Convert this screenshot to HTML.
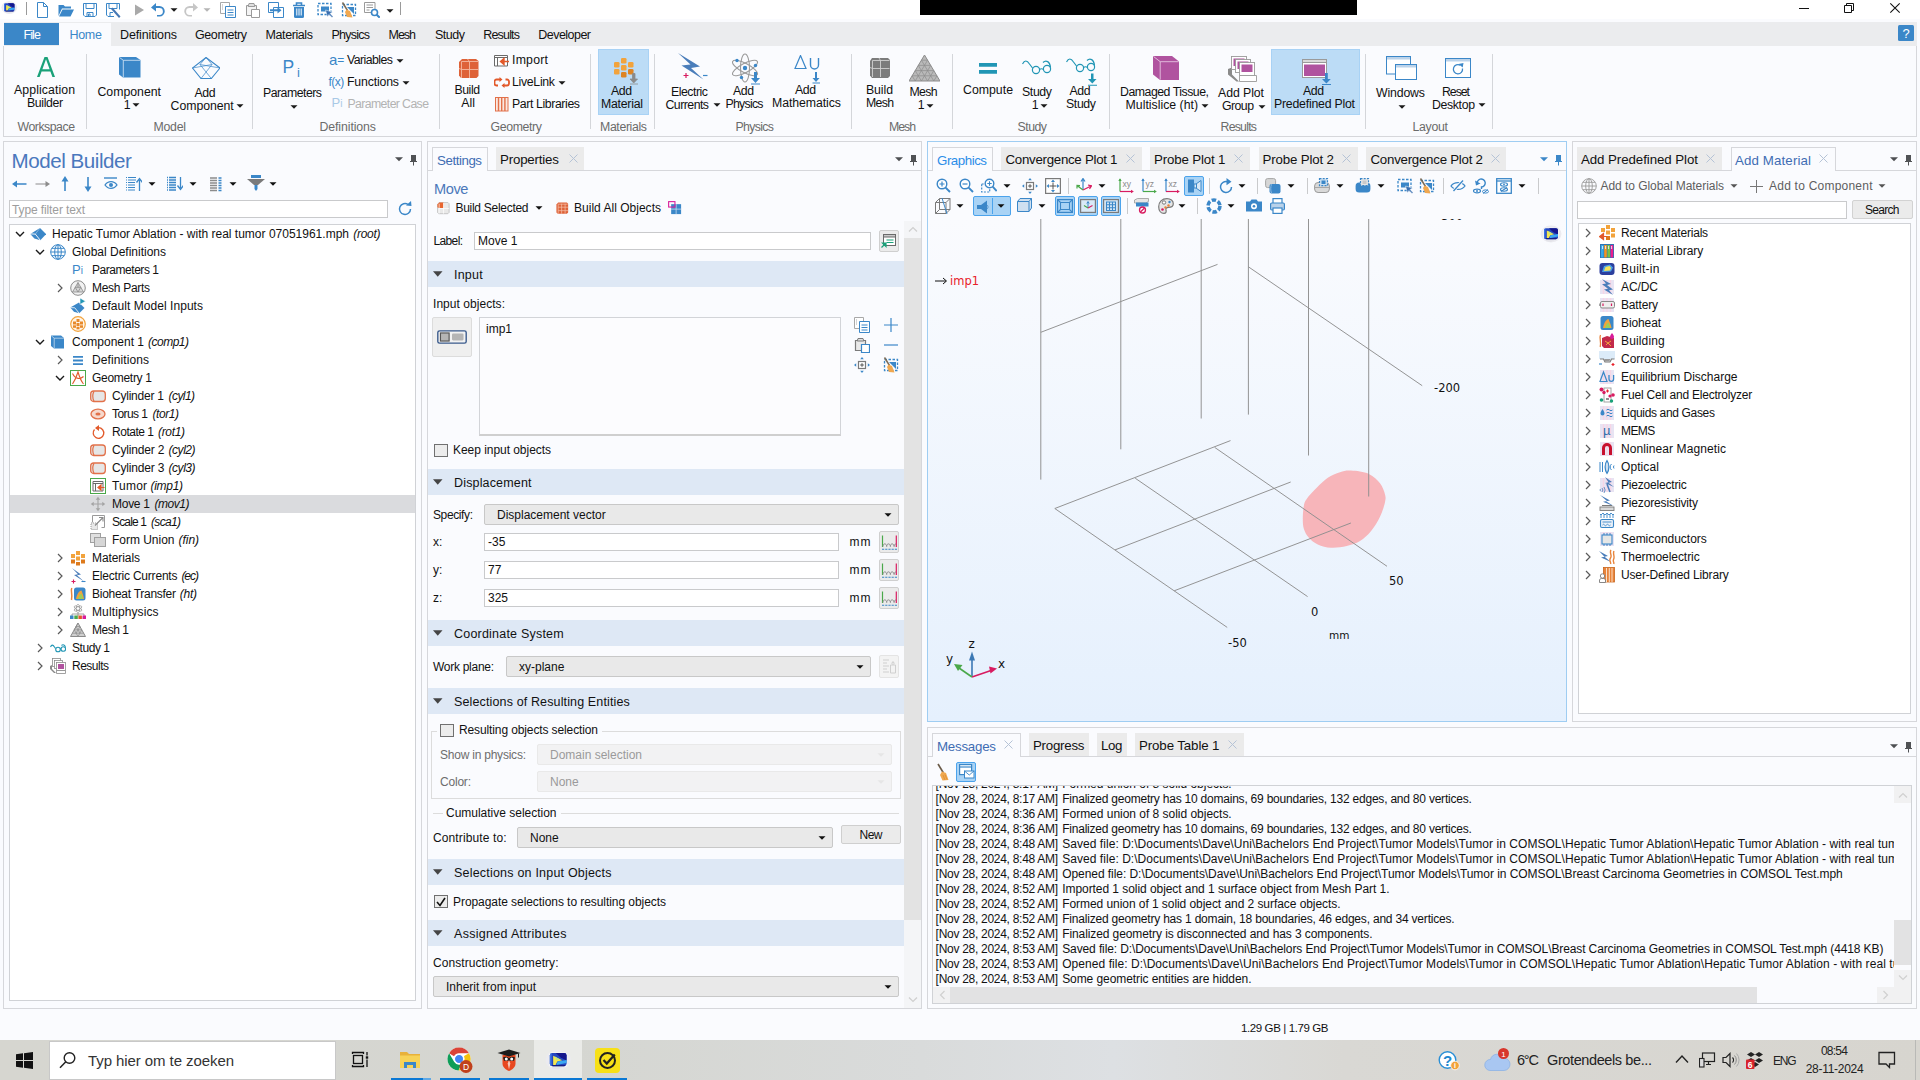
<!DOCTYPE html>
<html><head><meta charset="utf-8"><title>COMSOL Multiphysics</title><style>
html,body{margin:0;padding:0}
body{width:1920px;height:1080px;overflow:hidden;position:relative;background:#fafbfe;font-family:"Liberation Sans",sans-serif;font-size:12px;color:#111}
#root{position:absolute;left:0;top:0;width:1920px;height:1080px;overflow:hidden}
#root div,#root svg,#root span.a{position:absolute;box-sizing:border-box}
#root div.t{white-space:pre;box-sizing:content-box}
#root div.t span{position:static}
i{font-style:italic}
</style></head><body><div id="root">
<!-- ribbon -->
<div style="left:0px;top:0px;width:1920px;height:19px;background:#fff"></div>
<svg style="left:1px;top:0px;" width="16.5" height="15" viewBox="0 0 22 20"><ellipse cx="11" cy="10" rx="10.500" ry="8.500" fill="#ebebf0"/><path d="M3 7l12-4 1 1 4 9-9 5-5-1z" fill="#e4e4ea"/><rect x="3.500" y="3.700" width="15" height="12" rx="2.200" fill="#fdfdf6"/><rect x="4" y="4.200" width="14" height="11" rx="2" fill="#2446c0"/><path d="M9 4.200h7a2 2 0 0 1 2 2v4.300l-5-2.500z" fill="#15168c"/><path d="M4 6.200a2 2 0 0 1 1.500-1.900v10.800a2 2 0 0 1-1.500-1.900z" fill="#3d74e6"/><path d="M6.800 6.500l7.500 3.800-4 1-1.500 2.800h-2z" fill="#f3e64e"/><path d="M8 6.800l4.500 2.700-3 .5z" fill="#b8e68a"/><path d="M10.500 11.300l7.500-1.300v2.500l-8.500 1.700z" fill="#3aa8f2"/><path d="M5.500 14.300h11.500a2 2 0 0 1-1 .9h-9.500z" fill="#10106e"/></svg>
<svg style="left:33.5px;top:2px" width="16" height="16" viewBox="0 0 16 16"><path d="M3.5 .5h6l4 4v11h-10z" fill="#fff" stroke="#3b87c8" stroke-width="1"/><path d="M9.5 .5v4h4" fill="none" stroke="#3b87c8"/></svg>
<svg style="left:58px;top:2px" width="16" height="16" viewBox="0 0 16 16"><path d="M.5 3h5l1.5 1.5h6v2h-9L.5 14z" fill="#3b87c8"/><path d="M4.5 7.5h11.5l-3.5 7H1z" fill="#3b87c8"/></svg>
<svg style="left:82px;top:2px" width="16" height="16" viewBox="0 0 16 16"><path d="M1.5 1.5h13v11.5l-1.5 1.5h-10l-1.5-1.5z" fill="#fff" stroke="#3b87c8"/><path d="M4 1.5v5h8v-5" fill="none" stroke="#3b87c8"/><path d="M5 14.5v-4h6v4M6.5 12h1.5v2.5h-1.5z" fill="none" stroke="#3b87c8"/></svg>
<svg style="left:105px;top:2px" width="16" height="16" viewBox="0 0 16 16"><path d="M1.5 1.5h13v6M9 14.5h-6l-1.5-1.5v-11.5" fill="none" stroke="#3b87c8"/><path d="M4 1.5v5h8v-5" fill="none" stroke="#3b87c8"/><path d="M5 14.5v-4h3" fill="none" stroke="#3b87c8"/><path d="M7.5 5.5l8 9-1.5 1.5-8-9z" fill="#4678b4"/></svg>
<svg style="left:132px;top:2px" width="16" height="16" viewBox="0 0 16 16"><path d="M3 2.5l9 5.5-9 5.5z" fill="#a9a9a9"/></svg>
<svg style="left:150px;top:2px" width="16" height="16" viewBox="0 0 16 16"><path d="M1 5.5l5-4.5v3h3.5a5 5 0 0 1 0 10.5h-2.5v-1.6h2.5a3.4 3.4 0 0 0 0-6.8h-3.5v3.4z" fill="#3b87c8"/></svg>
<svg style="left:183px;top:2px" width="16" height="16" viewBox="0 0 16 16"><path d="M15 5.5l-5-4.5v3h-3.500a5 5 0 0 0 0 10.500h2.500v-1.600h-2.500a3.400 3.400 0 0 1 0-6.800h3.500v3.400z" fill="#c6c6c6"/></svg>
<svg style="left:220px;top:2px" width="16" height="16" viewBox="0 0 16 16"><path d="M.5 .5h9v11h-9z" fill="#fff" stroke="#a8a8a8"/><path d="M2 3h1M2 5h1M2 7h1" stroke="#a8a8a8"/><path d="M5.500 4.500h10v11h-10z" fill="#fff" stroke="#3b87c8"/><path d="M7.500 8h6M7.500 10.500h6M7.500 13h6" stroke="#3b87c8"/></svg>
<svg style="left:245px;top:2px" width="16" height="16" viewBox="0 0 16 16"><path d="M1.500 3.500h10v10h-10z" fill="#f4f4f4" stroke="#9a9a9a"/><path d="M4 1.500h5l.8 3h-6.600z" fill="#e0e0e0" stroke="#9a9a9a"/><path d="M6.500 7.500h8v8h-8z" fill="#fff" stroke="#9a9a9a"/></svg>
<svg style="left:268px;top:2px" width="16" height="16" viewBox="0 0 16 16"><path d="M.5 .5h10v10h-10z" fill="#fff" stroke="#3b87c8"/><path d="M5.500 5.500h10v10h-10z" fill="#fff" stroke="#3b87c8"/><path d="M2 7.300h7.500v-2.300l4 3.300-4 3.300v-2.300h-7.500z" fill="#3b87c8"/></svg>
<svg style="left:291px;top:2px" width="16" height="16" viewBox="0 0 16 16"><path d="M2 3.500h12M5.500 3v-2h5v2" fill="none" stroke="#3b87c8" stroke-width="1.6"/><path d="M3 5h10v9.500a1.500 1.500 0 0 1-1.500 1.500h-7a1.500 1.500 0 0 1-1.500-1.500z" fill="#3b87c8"/><path d="M5.800 6.500v7M8 6.500v7M10.200 6.500v7" stroke="#fff" stroke-width="1"/></svg>
<svg style="left:317px;top:2px" width="16" height="16" viewBox="0 0 16 16"><path d="M1 1.500h13v11h-13z" fill="none" stroke="#3b87c8" stroke-width="1.300" stroke-dasharray="2.500 1.500"/><path d="M4 4.500h8v5h-8z" fill="#3b87c8"/><path d="M8.500 8l2 7 1.500-2.500 3 3 1-1-3-3 2.500-1.500z" fill="#3a6fb0" stroke="#fff" stroke-width=".5"/></svg>
<svg style="left:341px;top:2px" width="16" height="16" viewBox="0 0 16 16"><path d="M1.500 2.500h13v11h-13z" fill="none" stroke="#3b87c8" stroke-width="1.300" stroke-dasharray="2.500 1.500"/><path d="M6 5h7v7z" fill="#3b87c8"/><path d="M1.500 .5l5 8" stroke="#7a6a55" stroke-width="1.500"/><path d="M5.500 7.500l3.500 1.500 2.500 6.500-5.500-.5-2-5z" fill="#f0a850"/></svg>
<svg style="left:364px;top:2px" width="16" height="16" viewBox="0 0 16 16"><path d="M.5 .5h10.500v10h-10.500z" fill="#fff" stroke="#9a9a9a"/><path d="M2.500 3h6.500M2.500 5.500h6.500M2.500 8h3" stroke="#9a9a9a"/><circle cx="10.500" cy="10.500" r="3" fill="#fff" stroke="#3b87c8" stroke-width="1.600"/><path d="M12.700 12.700l3 3" stroke="#3b87c8" stroke-width="2"/></svg>
<div style="left:26px;top:2px;width:1px;height:13px;background:#9a9a9a"></div>
<div style="left:400px;top:2px;width:1px;height:13px;background:#9a9a9a"></div>
<svg style="left:169.5px;top:6.5px;" width="8" height="6" viewBox="0 0 8 6"><path d="M0.5 1.2h7.0L4 4.7z" fill="#1a1a1a"/></svg>
<svg style="left:202.5px;top:6.5px;" width="8" height="6" viewBox="0 0 8 6"><path d="M0.5 1.2h7.0L4 4.7z" fill="#b5b5b5"/></svg>
<svg style="left:385.5px;top:7.5px;" width="8" height="6" viewBox="0 0 8 6"><path d="M0.5 1.2h7.0L4 4.7z" fill="#1a1a1a"/></svg>
<div style="left:920px;top:0px;width:437px;height:15px;background:#000"></div>
<svg style="left:1798px;top:3px;" width="12" height="12" viewBox="0 0 12 12"><path d="M1 5.500h10" stroke="#111" stroke-width="1"/></svg>
<svg style="left:1843px;top:2px;" width="12" height="12" viewBox="0 0 12 12"><path d="M1.500 3.500h7v7h-7zM3.500 3.500v-2h7v7h-2" fill="none" stroke="#111" stroke-width="1"/></svg>
<svg style="left:1889px;top:2px;" width="12" height="12" viewBox="0 0 12 12"><path d="M1.300 1.300l9.400 9.400M10.700 1.300l-9.400 9.400" stroke="#111" stroke-width="1.100"/></svg>
<div style="left:4px;top:22px;width:1913px;height:24px;background:#ebecee"></div>
<div style="left:4px;top:23px;width:55px;height:22px;background:#3b87c8"></div>
<div style="left:59px;top:23px;width:52px;height:23px;background:#fafbfe"></div>
<div class="t" style="left:23.4px;top:27px;height:16px;line-height:16px;font-size:12.5px;letter-spacing:-0.848px;color:#fff">File</div>
<div class="t" style="left:69.4px;top:27px;height:16px;line-height:16px;font-size:12.5px;letter-spacing:-0.248px;color:#3b87c8">Home</div>
<div class="t" style="left:120px;top:27px;height:16px;line-height:16px;font-size:12.5px;letter-spacing:-0.136px;color:#111">Definitions</div>
<div class="t" style="left:195px;top:27px;height:16px;line-height:16px;font-size:12.5px;letter-spacing:-0.411px;color:#111">Geometry</div>
<div class="t" style="left:265.5px;top:27px;height:16px;line-height:16px;font-size:12.5px;letter-spacing:-0.401px;color:#111">Materials</div>
<div class="t" style="left:331.5px;top:27px;height:16px;line-height:16px;font-size:12.5px;letter-spacing:-0.761px;color:#111">Physics</div>
<div class="t" style="left:388.5px;top:27px;height:16px;line-height:16px;font-size:12.5px;letter-spacing:-1.022px;color:#111">Mesh</div>
<div class="t" style="left:435px;top:27px;height:16px;line-height:16px;font-size:12.5px;letter-spacing:-0.491px;color:#111">Study</div>
<div class="t" style="left:483.3px;top:27px;height:16px;line-height:16px;font-size:12.5px;letter-spacing:-0.830px;color:#111">Results</div>
<div class="t" style="left:538.3px;top:27px;height:16px;line-height:16px;font-size:12.5px;letter-spacing:-0.535px;color:#111">Developer</div>
<div style="left:1898px;top:25px;width:16px;height:16px;background:#3b87c8;border-radius:1.5px"><div class="t" style="left:0;top:0;width:16px;height:16px;line-height:17px;text-align:center;color:#fff;font-size:13px">?</div></div>
<div style="left:3px;top:46px;width:1914px;height:91px;background:#fafbfe;border:1px solid #d6d7db;border-top:none"></div>
<div style="left:86px;top:54px;width:1px;height:75px;background:#d4d6da"></div>
<div style="left:252px;top:54px;width:1px;height:75px;background:#d4d6da"></div>
<div style="left:439px;top:54px;width:1px;height:75px;background:#d4d6da"></div>
<div style="left:590px;top:54px;width:1px;height:75px;background:#d4d6da"></div>
<div style="left:654px;top:54px;width:1px;height:75px;background:#d4d6da"></div>
<div style="left:851px;top:54px;width:1px;height:75px;background:#d4d6da"></div>
<div style="left:952px;top:54px;width:1px;height:75px;background:#d4d6da"></div>
<div style="left:1109px;top:54px;width:1px;height:75px;background:#d4d6da"></div>
<div style="left:1365px;top:54px;width:1px;height:75px;background:#d4d6da"></div>
<div style="left:1492px;top:54px;width:1px;height:75px;background:#d4d6da"></div>
<div style="left:598px;top:49px;width:51px;height:66px;background:#bcdcf6;border:1px solid #a8d2f5"></div>
<div style="left:1271px;top:49px;width:89px;height:66px;background:#bcdcf6;border:1px solid #a8d2f5"></div>
<svg style="left:36.5px;top:57px" width="18" height="20" viewBox="0 0 18 20"><path d="M0 20L7.500 0h3L18 20h-2.600l-2-5.500h-8.800l-2 5.500zM5.400 12.300h7.200L9 2.300z" fill="#1aa179"/></svg>
<div class="t" style="left:14px;top:82px;height:16px;line-height:16px;font-size:12.3px;letter-spacing:0.083px;">Application</div>
<div class="t" style="left:27px;top:95px;height:16px;line-height:16px;font-size:12.3px;letter-spacing:-0.382px;">Builder</div>
<svg style="left:118.5px;top:57px" width="22" height="21" viewBox="0 0 22 21"><path d="M0 0h17l4.500 3v17.500h-17.500l-4-3z" fill="#3b87c8"/><path d="M.3 .3l4 3h17M4.300 3.300v17" stroke="#dbeaf7" stroke-width=".8" fill="none"/></svg>
<div class="t" style="left:97.5px;top:84px;height:16px;line-height:16px;font-size:12.3px;letter-spacing:-0.011px;">Component</div>
<div class="t" style="left:123.7px;top:97px;height:16px;line-height:16px;font-size:12.3px;letter-spacing:-1.200px;">1</div>
<svg style="left:132px;top:102px;" width="8" height="6" viewBox="0 0 8 6"><path d="M0.5 1.2h7.0L4 4.7z" fill="#1a1a1a"/></svg>
<svg style="left:192px;top:57px" width="28" height="22" viewBox="0 0 28 22"><path d="M14 .5L28 11L19.300 21.500H9L.5 11Z" fill="none" stroke="#3b87c8" stroke-width="1.100"/><path d="M.5 11L20 7.500M28 11L8 7.500M9 21.500L20 7.500M19.300 21.500L8 7.500M14 .5L8 7.500M14 .5L20 7.500" fill="none" stroke="#3b87c8" stroke-width=".7"/></svg>
<div class="t" style="left:194.4px;top:85px;height:16px;line-height:16px;font-size:12.3px;letter-spacing:-0.343px;">Add</div>
<div class="t" style="left:170.6px;top:98px;height:16px;line-height:16px;font-size:12.3px;letter-spacing:-0.049px;">Component</div>
<svg style="left:235.5px;top:103px;" width="8" height="6" viewBox="0 0 8 6"><path d="M0.5 1.2h7.0L4 4.7z" fill="#1a1a1a"/></svg>
<div class="t" style="left:282.5px;top:56px;height:22px;line-height:22px;font-size:17.5px;color:#3b87c8">P</div>
<div class="t" style="left:297px;top:64px;height:17px;line-height:17px;font-size:13px;color:#3b87c8">i</div>
<div class="t" style="left:263px;top:85px;height:16px;line-height:16px;font-size:12.3px;letter-spacing:-0.508px;">Parameters</div>
<svg style="left:289.5px;top:103.5px;" width="8" height="6" viewBox="0 0 8 6"><path d="M0.5 1.2h7.0L4 4.7z" fill="#1a1a1a"/></svg>
<div class="t" style="left:329px;top:51px;font-size:15px;line-height:18px;color:#3b87c8">a<span style="font-size:12px;position:relative;top:-1px">=</span></div>
<div class="t" style="left:347px;top:52px;height:16px;line-height:16px;font-size:12.3px;letter-spacing:-0.546px;">Variables</div>
<svg style="left:396px;top:57.5px;" width="8" height="6" viewBox="0 0 8 6"><path d="M0.5 1.2h7.0L4 4.7z" fill="#1a1a1a"/></svg>
<div class="t" style="left:328.500px;top:73px;font-size:12px;line-height:18px;color:#3b87c8;letter-spacing:-.5px">f(x)</div>
<div class="t" style="left:347px;top:74px;height:16px;line-height:16px;font-size:12.3px;letter-spacing:-0.166px;">Functions</div>
<svg style="left:401.5px;top:79.5px;" width="8" height="6" viewBox="0 0 8 6"><path d="M0.5 1.2h7.0L4 4.7z" fill="#1a1a1a"/></svg>
<div class="t" style="left:331.500px;top:94px;font-size:13px;line-height:18px;color:#a9c9e6">P<span style="font-size:10px">i</span></div>
<div class="t" style="left:347.5px;top:96px;height:16px;line-height:16px;font-size:12.3px;letter-spacing:-0.620px;color:#b3b3b3">Parameter Case</div>
<svg style="left:458.5px;top:58.5px" width="20" height="20" viewBox="0 0 20 20"><path d="M0 3l3-3h14l2.500 2v15l-2 2h-15.500l-2-2.500z" fill="#de6238"/><path d="M2.500 2.500h17M2.500 2.500v16.500M2.500 10.500h17M10.500 2.500v16.500M10.500 2.500l-2-2.500M0 9.500l2.500 1" stroke="#f4b8a0" stroke-width=".9" fill="none"/></svg>
<div class="t" style="left:454.5px;top:82px;height:16px;line-height:16px;font-size:12.3px;letter-spacing:-0.463px;">Build</div>
<div class="t" style="left:461.2px;top:95px;height:16px;line-height:16px;font-size:12.3px;letter-spacing:0.065px;">All</div>
<svg style="left:494px;top:53.5px" width="16" height="13" viewBox="0 0 16 13"><path d="M.5 1.500h13v10.500h-13z" fill="#fff" stroke="#6a6a6a"/><path d="M.5 3.500h13M3.500 3.500v8.500" stroke="#6a6a6a" fill="none"/><path d="M15 7.500h-7M10 4.500l-3.500 3 3.500 3z" stroke="#e2592a" stroke-width="1.400" fill="#e2592a"/></svg>
<div class="t" style="left:512px;top:52px;height:16px;line-height:16px;font-size:12.3px;letter-spacing:0.228px;">Import</div>
<svg style="left:494px;top:75.5px" width="16" height="13" viewBox="0 0 16 13"><path d="M6 3.500h-3.500a2 2 0 0 0-2 2v2a2 2 0 0 0 2 2h1.500M9 9.500h4a2 2 0 0 0 2-2v-2a2 2 0 0 0-2-2h-1.500" fill="none" stroke="#e2592a" stroke-width="1.800"/><path d="M5.500 1l3 2.500-3 2.500zM10.500 7l-3 2.500 3 2.500z" fill="#e2592a"/></svg>
<div class="t" style="left:512px;top:74px;height:16px;line-height:16px;font-size:12.3px;letter-spacing:-0.304px;">LiveLink</div>
<svg style="left:557.5px;top:79.5px;" width="8" height="6" viewBox="0 0 8 6"><path d="M0.5 1.2h7.0L4 4.7z" fill="#1a1a1a"/></svg>
<svg style="left:495px;top:96.5px" width="14" height="15" viewBox="0 0 14 15"><rect x=".5" y=".5" width="12.500" height="13.500" fill="#fbe9e2" stroke="#e2714a"/><path d="M3.500 .5v13.500M6.700 .5v13.500M9.900 .5v13.500" stroke="#e2714a" stroke-width="1.400"/></svg>
<div class="t" style="left:512px;top:96px;height:16px;line-height:16px;font-size:12.3px;letter-spacing:-0.396px;">Part Libraries</div>
<svg style="left:614px;top:58px" width="25" height="27" viewBox="0 0 25 27"><g fill="#f2a33c"><rect x="7" y="0" width="5.500" height="5.500" rx="1.300"/><rect x="0" y="4" width="5.500" height="5.500" rx="1.300"/><rect x="7" y="7" width="5.500" height="5.500" rx="1.300"/><rect x="14" y="4" width="5.500" height="5.500" rx="1.300"/><rect x="0" y="11" width="5.500" height="5.500" rx="1.300"/></g><g fill="#dd8424"><rect x="7" y="14" width="5.500" height="5.500" rx="1.300"/><rect x="14" y="11" width="5.500" height="5.500" rx="1.300"/></g><path d="M18.500 15.500h2.500v5.500h2.500l-3.800 4-3.700-4h2.500zM16 26h8" fill="#8a8a8a" stroke="#8a8a8a" stroke-width=".8"/></svg>
<div class="t" style="left:611px;top:83px;height:16px;line-height:16px;font-size:12.3px;letter-spacing:-0.443px;">Add</div>
<div class="t" style="left:601px;top:96px;height:16px;line-height:16px;font-size:12.3px;letter-spacing:-0.250px;">Material</div>
<svg style="left:678px;top:53px" width="30" height="27" viewBox="0 0 30 27"><path d="M0 0l22 13.500-9 1.500 12.500 11.500-22-14 9-1z" fill="#4a7dba"/><path d="M5.500 22.500h5M8 20v5" stroke="#d81b60" stroke-width="1.200"/><path d="M25 22.500h4.500" stroke="#3b87c8" stroke-width="1.200"/></svg>
<div class="t" style="left:671px;top:84px;height:16px;line-height:16px;font-size:12.3px;letter-spacing:-0.475px;">Electric</div>
<div class="t" style="left:665.5px;top:97px;height:16px;line-height:16px;font-size:12.3px;letter-spacing:-0.524px;">Currents</div>
<svg style="left:713px;top:102px;" width="8" height="6" viewBox="0 0 8 6"><path d="M0.5 1.2h7.0L4 4.7z" fill="#1a1a1a"/></svg>
<svg style="left:732px;top:53px" width="29" height="32" viewBox="0 0 29 32"><g fill="none" stroke="#9a9a9a" stroke-width="1.100"><ellipse cx="13" cy="15" rx="4.500" ry="14"/><ellipse cx="13" cy="15" rx="4.500" ry="14" transform="rotate(62 13 15)"/><ellipse cx="13" cy="15" rx="4.500" ry="14" transform="rotate(-62 13 15)"/></g><g fill="#3b87c8"><circle cx="13" cy="15" r="2.200"/><circle cx="5" cy="7.500" r="1.700"/><circle cx="23.500" cy="12.500" r="1.700"/><circle cx="9.500" cy="24.500" r="1.700"/><path d="M22 19h3v6h3l-4.500 5-4.500-5h3zM19 31.500h9v-1h-9z"/></g></svg>
<div class="t" style="left:733px;top:83px;height:16px;line-height:16px;font-size:12.3px;letter-spacing:-0.443px;">Add</div>
<div class="t" style="left:725.5px;top:96px;height:16px;line-height:16px;font-size:12.3px;letter-spacing:-0.730px;">Physics</div>
<svg style="left:794px;top:55px" width="27" height="29" viewBox="0 0 27 29"><path d="M1 13.500l5.500-13 5.500 13z" fill="none" stroke="#3b87c8" stroke-width="1.200"/><path d="M16.500 3v7a4 4 0 0 0 8 0v-7" fill="none" stroke="#3b87c8" stroke-width="1.400"/><path d="M21 17h2v6h2.500l-3.500 4-3.500-4h2.500zM18.500 28.500h7.500v-1h-7.500z" fill="#3b87c8"/></svg>
<div class="t" style="left:795px;top:82px;height:16px;line-height:16px;font-size:12.3px;letter-spacing:-0.443px;">Add</div>
<div class="t" style="left:772px;top:95px;height:16px;line-height:16px;font-size:12.3px;letter-spacing:-0.072px;">Mathematics</div>
<svg style="left:870px;top:58px" width="20" height="20" viewBox="0 0 20 20"><path d="M0 3l2-3h16l2 2v16l-2 2h-16l-2-2.500z" fill="#7c7c7c"/><path d="M2.500 2.500h17M2.500 2.500v16.500M2.500 10.500h17M10.500 2.500v16.500M10.500 2.500l-1.500-2.500M0 9.500l2.500 1" stroke="#cfcfcf" stroke-width=".9" fill="none"/></svg>
<div class="t" style="left:866px;top:82px;height:16px;line-height:16px;font-size:12.3px;letter-spacing:-0.088px;">Build</div>
<div class="t" style="left:866px;top:95px;height:16px;line-height:16px;font-size:12.3px;letter-spacing:-0.693px;">Mesh</div>
<svg style="left:909px;top:54.5px" width="31" height="27" viewBox="0 0 31 27"><path d="M15.500 0l15.500 26h-31z" fill="#b9b9b9" stroke="#8c8c8c" stroke-width="1"/><path d="M12.400 5.200h6.200M9.300 10.400h12.400M6.200 15.600h18.600M3.100 20.800h24.800M12.400 5.200l12.400 20.800M9.300 10.400l9.300 15.600M6.200 15.600l6.200 10.400M3.100 20.800l3.100 5.200M18.600 5.200l-12.400 20.800M21.700 10.400l-9.300 15.600M24.800 15.600l-6.200 10.400M27.900 20.800l-3.100 5.200" stroke="#8c8c8c" stroke-width=".7" fill="none"/></svg>
<div class="t" style="left:909.5px;top:84px;height:16px;line-height:16px;font-size:12.3px;letter-spacing:-0.693px;">Mesh</div>
<div class="t" style="left:917.7px;top:97px;height:16px;line-height:16px;font-size:12.3px;letter-spacing:-1.200px;">1</div>
<svg style="left:925.5px;top:102.5px;" width="8" height="6" viewBox="0 0 8 6"><path d="M0.5 1.2h7.0L4 4.7z" fill="#1a1a1a"/></svg>
<svg style="left:979px;top:63px" width="18" height="11" viewBox="0 0 18 11"><path d="M0 0h18v3.800h-18zM0 7h18v3.800h-18z" fill="#2196b5"/></svg>
<div class="t" style="left:963px;top:82px;height:16px;line-height:16px;font-size:12.3px;letter-spacing:0.015px;">Compute</div>
<svg style="left:1022px;top:59px" width="30" height="16" viewBox="0 0 30 16"><g fill="none" stroke="#2196b5" stroke-width="1.200"><path d="M.5 5c2-4 4.500-4 7 0l3 4"/><circle cx="14" cy="11" r="3.600"/><circle cx="25" cy="10" r="3.600"/><path d="M17.500 10.500q2-1.500 4 0M21 3.500c3-3 7-1 7.500 5"/></g></svg>
<div class="t" style="left:1022px;top:84px;height:16px;line-height:16px;font-size:12.3px;letter-spacing:-0.363px;">Study</div>
<div class="t" style="left:1031.7px;top:97px;height:16px;line-height:16px;font-size:12.3px;letter-spacing:-1.200px;">1</div>
<svg style="left:1039.5px;top:102.5px;" width="8" height="6" viewBox="0 0 8 6"><path d="M0.5 1.2h7.0L4 4.7z" fill="#1a1a1a"/></svg>
<svg style="left:1066px;top:58px" width="32" height="30" viewBox="0 0 32 30"><g transform="translate(0,-1)" fill="none" stroke="#2196b5" stroke-width="1.200"><path d="M.5 5c2-4 4.500-4 7 0l3 4"/><circle cx="14" cy="11" r="3.600"/><circle cx="25" cy="10" r="3.600"/><path d="M17.500 10.500q2-1.500 4 0M21 3.500c3-3 7-1 7.500 5"/></g><path d="M25 15.500h2.500v5.500h3l-4.200 4.500-4.300-4.500h3zM22 27.800h9v-1h-9z" fill="#2196b5"/></svg>
<div class="t" style="left:1069.5px;top:83px;height:16px;line-height:16px;font-size:12.3px;letter-spacing:-0.443px;">Add</div>
<div class="t" style="left:1066px;top:96px;height:16px;line-height:16px;font-size:12.3px;letter-spacing:-0.363px;">Study</div>
<svg style="left:1153px;top:56px" width="26" height="24" viewBox="0 0 26 24"><path d="M0 0h19l7 5.500v18.500h-19l-7-5.500z" fill="#b0539f"/><path d="M.4 .4l6.800 5.300h18.500M7.200 5.700v18" stroke="#ecd3e8" stroke-width=".8" fill="none"/></svg>
<div class="t" style="left:1120px;top:84px;height:16px;line-height:16px;font-size:12.3px;letter-spacing:-0.480px;">Damaged Tissue,</div>
<div class="t" style="left:1125.6px;top:97px;height:16px;line-height:16px;font-size:12.3px;letter-spacing:-0.003px;">Multislice (ht)</div>
<svg style="left:1200.5px;top:102.5px;" width="8" height="6" viewBox="0 0 8 6"><path d="M0.5 1.2h7.0L4 4.7z" fill="#1a1a1a"/></svg>
<svg style="left:1228px;top:56px" width="29" height="27" viewBox="0 0 29 27"><path d="M0 13l4-1.500v7l7 7h-2.500l-8.500-7z" fill="#8a8a8a"/><rect x="3.5" y="0.5" width="15" height="13" fill="#fff" stroke="#9a9a9a" stroke-width=".9"/><rect x="5.5" y="2.5" width="11" height="7.500" fill="#b0539f"/><rect x="7.5" y="3.5" width="15" height="13" fill="#fff" stroke="#9a9a9a" stroke-width=".9"/><rect x="9.5" y="5.5" width="11" height="7.500" fill="#b0539f"/><rect x="11.5" y="6.5" width="15" height="13" fill="#fff" stroke="#9a9a9a" stroke-width=".9"/><rect x="13.5" y="8.5" width="11" height="7.500" fill="#b0539f"/><path d="M11.500 19.500h17v6h-17z" fill="#fff" stroke="#9a9a9a" stroke-width=".9"/></svg>
<div class="t" style="left:1218px;top:85px;height:16px;line-height:16px;font-size:12.3px;letter-spacing:-0.071px;">Add Plot</div>
<div class="t" style="left:1222px;top:98px;height:16px;line-height:16px;font-size:12.3px;letter-spacing:-0.547px;">Group</div>
<svg style="left:1257.5px;top:103.5px;" width="8" height="6" viewBox="0 0 8 6"><path d="M0.5 1.2h7.0L4 4.7z" fill="#1a1a1a"/></svg>
<svg style="left:1302px;top:59px" width="30" height="27" viewBox="0 0 30 27"><rect x=".5" y=".5" width="24" height="18" fill="#fff" stroke="#9a9a9a"/><rect x=".5" y=".5" width="24" height="3" fill="#d9d9d9" stroke="#9a9a9a"/><rect x="2" y="5.500" width="21" height="11.500" fill="#b0539f"/><path d="M23 14h2.800v6h3l-4.400 4.500-4.400-4.500h3zM20 26h9v-1h-9z" fill="#3b87c8"/></svg>
<div class="t" style="left:1303px;top:83px;height:16px;line-height:16px;font-size:12.3px;letter-spacing:-0.443px;">Add</div>
<div class="t" style="left:1274px;top:96px;height:16px;line-height:16px;font-size:12.3px;letter-spacing:-0.222px;">Predefined Plot</div>
<svg style="left:1386px;top:56px" width="31" height="24" viewBox="0 0 31 24"><g fill="#fff" stroke="#3b87c8" stroke-width="1"><rect x=".5" y=".5" width="24" height="17.500"/><rect x="9.500" y="8.500" width="21" height="15"/></g><path d="M1 1h23v2.500h-23zM10 9h20v2.500h-20z" fill="#bcd3ea"/></svg>
<div class="t" style="left:1376px;top:85px;height:16px;line-height:16px;font-size:12.3px;letter-spacing:-0.150px;">Windows</div>
<svg style="left:1397.5px;top:103.5px;" width="8" height="6" viewBox="0 0 8 6"><path d="M0.5 1.2h7.0L4 4.7z" fill="#1a1a1a"/></svg>
<svg style="left:1445px;top:58px" width="26" height="20" viewBox="0 0 26 20"><rect x=".5" y=".5" width="25" height="19" fill="#fff" stroke="#3b87c8"/><path d="M1 1h24v2.500h-24z" fill="#bcd3ea"/><path d="M17.500 10.500a4.600 4.600 0 1 1-2.200-3.200" fill="none" stroke="#3b87c8" stroke-width="1.300"/><path d="M13.500 6l5-1-.8 4.500z" fill="#3b87c8"/></svg>
<div class="t" style="left:1442px;top:84px;height:16px;line-height:16px;font-size:12.3px;letter-spacing:-1.033px;">Reset</div>
<div class="t" style="left:1432px;top:97px;height:16px;line-height:16px;font-size:12.3px;letter-spacing:-0.354px;">Desktop</div>
<svg style="left:1477.5px;top:102px;" width="8" height="6" viewBox="0 0 8 6"><path d="M0.5 1.2h7.0L4 4.7z" fill="#1a1a1a"/></svg>
<div class="t" style="left:17.5px;top:119px;height:16px;line-height:16px;font-size:12.3px;letter-spacing:-0.475px;color:#6b6b6b">Workspace</div>
<div class="t" style="left:153.5px;top:119px;height:16px;line-height:16px;font-size:12.3px;letter-spacing:-0.251px;color:#6b6b6b">Model</div>
<div class="t" style="left:319.5px;top:119px;height:16px;line-height:16px;font-size:12.3px;letter-spacing:-0.093px;color:#6b6b6b">Definitions</div>
<div class="t" style="left:490.5px;top:119px;height:16px;line-height:16px;font-size:12.3px;letter-spacing:-0.357px;color:#6b6b6b">Geometry</div>
<div class="t" style="left:600px;top:119px;height:16px;line-height:16px;font-size:12.3px;letter-spacing:-0.362px;color:#6b6b6b">Materials</div>
<div class="t" style="left:735.5px;top:119px;height:16px;line-height:16px;font-size:12.3px;letter-spacing:-0.646px;color:#6b6b6b">Physics</div>
<div class="t" style="left:889px;top:119px;height:16px;line-height:16px;font-size:12.3px;letter-spacing:-1.026px;color:#6b6b6b">Mesh</div>
<div class="t" style="left:1017.5px;top:119px;height:16px;line-height:16px;font-size:12.3px;letter-spacing:-0.488px;color:#6b6b6b">Study</div>
<div class="t" style="left:1220.5px;top:119px;height:16px;line-height:16px;font-size:12.3px;letter-spacing:-0.752px;color:#6b6b6b">Results</div>
<div class="t" style="left:1412.5px;top:119px;height:16px;line-height:16px;font-size:12.3px;letter-spacing:-0.286px;color:#6b6b6b">Layout</div>
<!-- left -->
<div style="left:3px;top:141px;width:419px;height:868px;background:#fafbfe;border:1px solid #d6d7db"></div>
<div class="t" style="left:11.5px;top:148px;height:25px;line-height:25px;font-size:20.6px;letter-spacing:-0.455px;color:#4a78bd">Model Builder</div>
<svg style="left:395px;top:156px;" width="8" height="6" viewBox="0 0 8 6"><path d="M0 1.2h8L4 5.2z" fill="#4d4f52"/></svg>
<svg style="left:410px;top:155px;" width="7" height="11" viewBox="0 0 7 11"><path d="M1 0h5v6h1v1h-3v3.500h-1v-3.500h-3v-1h1z" fill="#505255"/></svg>
<svg style="left:12px;top:176px" width="16" height="16" viewBox="0 0 16 16"><path d="M14.500 7.200v1.600h-9.500v2.700l-5-3.500 5-3.500v2.700z" fill="#3b87c8"/></svg>
<svg style="left:34.5px;top:176px" width="16" height="16" viewBox="0 0 16 16"><path d="M.5 7.400v1.200h10v2.400l4.500-3-4.500-3v2.400z" fill="#8c8c8c"/></svg>
<svg style="left:56.5px;top:176px" width="16" height="16" viewBox="0 0 16 16"><path d="M7.200 15h1.600v-9.500h2.700l-3.500-5.500-3.500 5.500h2.700z" fill="#3b87c8"/></svg>
<svg style="left:79.5px;top:176px" width="16" height="16" viewBox="0 0 16 16"><path d="M7.200 1h1.600v9.500h2.700l-3.500 5.500-3.500-5.500h2.700z" fill="#3b87c8"/></svg>
<svg style="left:103px;top:176px" width="16" height="16" viewBox="0 0 16 16"><path d="M1 2h13" stroke="#3b87c8" stroke-width="1.400"/><path d="M2 9c3-4.500 9-4.500 12 0-3 4.500-9 4.500-12 0z" fill="none" stroke="#3b87c8" stroke-width="1.300"/><circle cx="8" cy="9" r="2" fill="#3b87c8"/></svg>
<svg style="left:126px;top:176px" width="16" height="16" viewBox="0 0 16 16"><path d="M0 1.500h10M0 4h10M0 6.500h9M0 9h9M0 11.500h9M0 14h9" stroke="#3b87c8" stroke-width="1" stroke-dasharray="1 1 20"/><path d="M13.500 15v-11M10.500 6.500l3-4 3 4" fill="none" stroke="#3b87c8" stroke-width="1.300"/></svg>
<svg style="left:167px;top:176px" width="16" height="16" viewBox="0 0 16 16"><path d="M0 1.500h9M0 4h9M0 6.500h9M0 9h9M0 11.500h9M0 14h9" stroke="#3b87c8" stroke-width="1.300" stroke-dasharray="1 1 20"/><path d="M13.500 1v11M10.500 9.500l3 4 3-4" fill="none" stroke="#3b87c8" stroke-width="1.300"/></svg>
<svg style="left:210px;top:176px" width="16" height="16" viewBox="0 0 16 16"><path d="M0 2h7M0 4.500h7M0 7h7M0 9.500h7M0 12h7M0 14.500h7" stroke="#8c8c8c" stroke-width="1.300"/><path d="M8.500 2h3M8.500 4.500h3M8.500 7h3M8.500 9.500h3M8.500 12h3M8.500 14.500h3" stroke="#3b87c8" stroke-width="1.300"/></svg>
<svg style="left:247px;top:175px;" width="18" height="16" viewBox="0 0 18 16"><path d="M4 0h10v3h-10z" fill="#3b87c8"/><path d="M0 4h18l-7 6v0h-4z" fill="#7a7a7a"/><path d="M7.500 10h3v4l-1.500 2-1.500-2z" fill="#3b87c8"/></svg>
<svg style="left:147.5px;top:181px;" width="8" height="6" viewBox="0 0 8 6"><path d="M0.5 1.2h7.0L4 4.7z" fill="#111"/></svg>
<svg style="left:188.5px;top:181px;" width="8" height="6" viewBox="0 0 8 6"><path d="M0.5 1.2h7.0L4 4.7z" fill="#111"/></svg>
<svg style="left:228.5px;top:181px;" width="8" height="6" viewBox="0 0 8 6"><path d="M0.5 1.2h7.0L4 4.7z" fill="#111"/></svg>
<svg style="left:268.5px;top:181px;" width="8" height="6" viewBox="0 0 8 6"><path d="M0.5 1.2h7.0L4 4.7z" fill="#111"/></svg>
<div style="left:9px;top:200px;width:379px;height:18px;background:#fff;border:1px solid #c9cacc"></div>
<div class="t" style="left:12px;top:202px;height:16px;line-height:16px;font-size:12px;letter-spacing:-0.113px;color:#9d9d9d">Type filter text</div>
<svg style="left:397px;top:201px" width="16" height="16" viewBox="0 0 16 16"><path d="M13.500 8a5.500 5.500 0 1 1-2.300-4.500" fill="none" stroke="#3b87c8" stroke-width="1.500"/><path d="M9 4.500l5.500.5-.5-5z" fill="#3b87c8"/></svg>
<div style="left:9px;top:224px;width:407px;height:777px;background:#fff;border:1px solid #d0d2d6"></div>
<div style="left:10px;top:495px;width:405px;height:18px;background:#dadbde"></div>
<svg style="left:14.5px;top:230.0px;" width="10" height="8" viewBox="0 0 10 8"><path d="M1 2l4 4 4-4" fill="none" stroke="#1a1a1a" stroke-width="1.4"/></svg>
<svg style="left:30px;top:225.5px" width="16" height="16" viewBox="0 0 16 16"><path d="M.3 7.900L10 2.100L16.100 8.200L10.300 14.300L4.400 12.400Z" fill="#3b87c8"/><path d="M.3 7.900L5.300 8.100L10.300 14.300" fill="none" stroke="#fff" stroke-width=".9"/><path d="M5.300 8.100L10 2.100" fill="none" stroke="#fff" stroke-width=".35"/></svg>
<div class="t" style="left:52px;top:226px;height:16px;line-height:16px;font-size:12px;letter-spacing:0.003px;">Hepatic Tumor Ablation - with real tumor 07051961.mph</div>
<div class="t" style="left:353.2px;top:226px;height:16px;line-height:16px;font-size:12px;font-style:italic;letter-spacing:-0.274px;">(root)</div>
<svg style="left:34.5px;top:248.0px;" width="10" height="8" viewBox="0 0 10 8"><path d="M1 2l4 4 4-4" fill="none" stroke="#1a1a1a" stroke-width="1.4"/></svg>
<svg style="left:50px;top:243.5px" width="16" height="16" viewBox="0 0 16 16"><g fill="none" stroke="#3b87c8" stroke-width="1"><circle cx="8" cy="8" r="7.300"/><ellipse cx="8" cy="8" rx="3.300" ry="7.300"/><path d="M8 .7v14.600M.7 8h14.600M2 4.300h12M2 11.700h12"/></g></svg>
<div class="t" style="left:72px;top:244px;height:16px;line-height:16px;font-size:12px;letter-spacing:-0.003px;">Global Definitions</div>
<div class="t" style="left:72px;top:260.5px;font-size:13px;line-height:18px;color:#3b87c8">P<span style="font-size:10px">i</span></div>
<div class="t" style="left:92px;top:262px;height:16px;line-height:16px;font-size:12px;letter-spacing:-0.457px;">Parameters 1</div>
<svg style="left:55.5px;top:282.5px;" width="8" height="10" viewBox="0 0 8 10"><path d="M2 1l4 4-4 4" fill="none" stroke="#5a5a5a" stroke-width="1.2"/></svg>
<svg style="left:70px;top:279.5px" width="16" height="16" viewBox="0 0 16 16"><circle cx="8" cy="8" r="7.300" fill="#f2f2f2" stroke="#8c8c8c" stroke-width="1"/><path d="M8 2.500l5.500 9.500h-11zM5.200 7.300h5.600l-2.800 4.700zM8 2.500v4.800" fill="#d6d6d6" stroke="#8c8c8c" stroke-width=".8"/></svg>
<div class="t" style="left:92px;top:280px;height:16px;line-height:16px;font-size:12px;letter-spacing:-0.299px;">Mesh Parts</div>
<svg style="left:70px;top:297.5px" width="16" height="16" viewBox="0 0 16 16"><g transform="translate(0,2.500) scale(.9)"><path d="M.3 7.900L10 2.100L16.100 8.200L10.300 14.300L4.400 12.400Z" fill="#3b87c8"/><path d="M.3 7.900L5.300 8.100L10.300 14.300" fill="none" stroke="#fff" stroke-width=".9"/></g><path d="M10 0l5.500 3.200-5.500 3.300z" fill="#2196b5" stroke="#fafbfe" stroke-width=".6"/></svg>
<div class="t" style="left:92px;top:298px;height:16px;line-height:16px;font-size:12px;letter-spacing:0.049px;">Default Model Inputs</div>
<svg style="left:70px;top:315.5px" width="16" height="16" viewBox="0 0 16 16"><circle cx="8" cy="8" r="7.300" fill="#fff4e6" stroke="#f2a33c" stroke-width="1.200"/><g fill="#e8892a"><rect x="6.500" y="3" width="3" height="3"/><rect x="3" y="5.500" width="3" height="3"/><rect x="10" y="5.500" width="3" height="3"/><rect x="6.500" y="7" width="3" height="3"/><rect x="3" y="9.300" width="3" height="2.500"/><rect x="10" y="9.300" width="3" height="2.500"/><rect x="6.500" y="10.800" width="3" height="2.500"/></g></svg>
<div class="t" style="left:92px;top:316px;height:16px;line-height:16px;font-size:12px;letter-spacing:-0.085px;">Materials</div>
<svg style="left:34.5px;top:338.0px;" width="10" height="8" viewBox="0 0 10 8"><path d="M1 2l4 4 4-4" fill="none" stroke="#1a1a1a" stroke-width="1.4"/></svg>
<svg style="left:50px;top:333.5px" width="16" height="16" viewBox="0 0 16 16"><path d="M1 1.500h10l3 2.500v10.500h-10l-3-2.500z" fill="#3b87c8"/><path d="M1.300 1.800l2.900 2.400h9.800M4.200 4.200v10" stroke="#d5e6f5" stroke-width=".7" fill="none"/></svg>
<div class="t" style="left:72px;top:334px;height:16px;line-height:16px;font-size:12px;letter-spacing:-0.005px;">Component 1</div>
<div class="t" style="left:148px;top:334px;height:16px;line-height:16px;font-size:12px;font-style:italic;letter-spacing:-0.502px;">(comp1)</div>
<svg style="left:55.5px;top:354.5px;" width="8" height="10" viewBox="0 0 8 10"><path d="M2 1l4 4-4 4" fill="none" stroke="#5a5a5a" stroke-width="1.2"/></svg>
<svg style="left:70px;top:351.5px" width="16" height="16" viewBox="0 0 16 16"><path d="M3 4h10v1.800h-10zM3 7.600h10v1.800h-10zM3 11.200h10v1.800h-10z" fill="#3b87c8"/></svg>
<div class="t" style="left:92px;top:352px;height:16px;line-height:16px;font-size:12px;letter-spacing:0.097px;">Definitions</div>
<svg style="left:54.5px;top:374.0px;" width="10" height="8" viewBox="0 0 10 8"><path d="M1 2l4 4 4-4" fill="none" stroke="#1a1a1a" stroke-width="1.4"/></svg>
<svg style="left:70px;top:369.5px" width="16" height="16" viewBox="0 0 16 16"><rect x=".5" y=".5" width="15" height="15" fill="#fff" stroke="#4aa84a" stroke-width="1"/><path d="M2.500 14c2-3 4-7 5.500-12 1.500 5 3 9 5.500 12M2.500 3.500c3 6 8 6 11 3" fill="none" stroke="#e2592a" stroke-width="1.100"/></svg>
<div class="t" style="left:92px;top:370px;height:16px;line-height:16px;font-size:12px;letter-spacing:-0.299px;">Geometry 1</div>
<svg style="left:90px;top:387.5px" width="16" height="16" viewBox="0 0 16 16"><rect x=".7" y="3" width="14.600" height="10.500" rx="3" fill="#e6e6e6" stroke="#e2714a" stroke-width="1.300"/><path d="M4 3.200c-1.500 3-1.500 7 0 10" fill="none" stroke="#e2714a" stroke-width="1.200"/></svg>
<div class="t" style="left:112px;top:388px;height:16px;line-height:16px;font-size:12px;letter-spacing:-0.225px;">Cylinder 1</div>
<div class="t" style="left:168.6px;top:388px;height:16px;line-height:16px;font-size:12px;font-style:italic;letter-spacing:-0.587px;">(cyl1)</div>
<svg style="left:90px;top:405.5px" width="16" height="16" viewBox="0 0 16 16"><ellipse cx="8" cy="8" rx="7" ry="4.800" fill="#f6d9cd" stroke="#e2714a" stroke-width="1.300"/><ellipse cx="8" cy="8" rx="2.600" ry="1.500" fill="#e2714a"/></svg>
<div class="t" style="left:112px;top:406px;height:16px;line-height:16px;font-size:12px;letter-spacing:-0.559px;">Torus 1</div>
<div class="t" style="left:152.5px;top:406px;height:16px;line-height:16px;font-size:12px;font-style:italic;letter-spacing:-0.434px;">(tor1)</div>
<svg style="left:90px;top:423.5px" width="16" height="16" viewBox="0 0 16 16"><path d="M4.500 5.500a5.300 5.300 0 1 0 4-1.800" fill="none" stroke="#e2592a" stroke-width="1.300"/><path d="M9 1l-4 3 4 3z" fill="#e2592a"/></svg>
<div class="t" style="left:112px;top:424px;height:16px;line-height:16px;font-size:12px;letter-spacing:-0.481px;">Rotate 1</div>
<div class="t" style="left:158px;top:424px;height:16px;line-height:16px;font-size:12px;font-style:italic;letter-spacing:-0.334px;">(rot1)</div>
<svg style="left:90px;top:441.5px" width="16" height="16" viewBox="0 0 16 16"><rect x=".7" y="3" width="14.600" height="10.500" rx="3" fill="#e6e6e6" stroke="#e2714a" stroke-width="1.300"/><path d="M4 3.200c-1.500 3-1.500 7 0 10" fill="none" stroke="#e2714a" stroke-width="1.200"/></svg>
<div class="t" style="left:112px;top:442px;height:16px;line-height:16px;font-size:12px;letter-spacing:-0.169px;">Cylinder 2</div>
<div class="t" style="left:168.6px;top:442px;height:16px;line-height:16px;font-size:12px;font-style:italic;letter-spacing:-0.487px;">(cyl2)</div>
<svg style="left:90px;top:459.5px" width="16" height="16" viewBox="0 0 16 16"><rect x=".7" y="3" width="14.600" height="10.500" rx="3" fill="#e6e6e6" stroke="#e2714a" stroke-width="1.300"/><path d="M4 3.200c-1.500 3-1.500 7 0 10" fill="none" stroke="#e2714a" stroke-width="1.200"/></svg>
<div class="t" style="left:112px;top:460px;height:16px;line-height:16px;font-size:12px;letter-spacing:-0.169px;">Cylinder 3</div>
<div class="t" style="left:168.6px;top:460px;height:16px;line-height:16px;font-size:12px;font-style:italic;letter-spacing:-0.487px;">(cyl3)</div>
<svg style="left:90px;top:477.5px" width="16" height="16" viewBox="0 0 16 16"><rect x=".5" y=".5" width="15" height="15" fill="#fff" stroke="#4aa84a"/><path d="M3 3.500h10v9.500h-10zM3 5.500h10M5.500 5.500v7.500" fill="none" stroke="#6a6a6a" stroke-width="1"/><path d="M14.500 9.500h-5M11 7l-3 2.500 3 2.500z" fill="#e2592a" stroke="#e2592a" stroke-width="1.200"/></svg>
<div class="t" style="left:112px;top:478px;height:16px;line-height:16px;font-size:12px;letter-spacing:0.193px;">Tumor</div>
<div class="t" style="left:150.5px;top:478px;height:16px;line-height:16px;font-size:12px;font-style:italic;letter-spacing:-0.301px;">(imp1)</div>
<svg style="left:90px;top:495.5px" width="16" height="16" viewBox="0 0 16 16"><path d="M8 2.500v11M2.500 8h11" stroke="#a4a4a4" stroke-width="1.100"/><path d="M8 .8l2.300 2.900h-4.600zM8 15.200l2.300-2.900h-4.600zM.8 8l2.900-2.300v4.600zM15.200 8l-2.900-2.300v4.600z" fill="#a4a4a4"/></svg>
<div class="t" style="left:112px;top:496px;height:16px;line-height:16px;font-size:12px;letter-spacing:-0.270px;">Move 1</div>
<div class="t" style="left:154.5px;top:496px;height:16px;line-height:16px;font-size:12px;font-style:italic;letter-spacing:-0.468px;">(mov1)</div>
<svg style="left:90px;top:513.5px" width="16" height="16" viewBox="0 0 16 16"><path d="M2.500 1.500h12v12h-3M2.500 1.500v7" fill="none" stroke="#9a9a9a" stroke-width="1"/><rect x="1" y="9" width="6.500" height="6.500" fill="#e8e8e8" stroke="#9a9a9a" stroke-width="1" stroke-dasharray="1 1"/><path d="M5 11.500l7.500-7.500M9 3.500h4v4" fill="none" stroke="#8a8a8a" stroke-width="1.100"/></svg>
<div class="t" style="left:112px;top:514px;height:16px;line-height:16px;font-size:12px;letter-spacing:-0.838px;">Scale 1</div>
<div class="t" style="left:151px;top:514px;height:16px;line-height:16px;font-size:12px;font-style:italic;letter-spacing:-0.668px;">(sca1)</div>
<svg style="left:90px;top:531.5px" width="16" height="16" viewBox="0 0 16 16"><rect x=".5" y="1.500" width="10" height="9" fill="#e0e0e0" stroke="#a0a0a0"/><rect x="4.500" y="5.500" width="11" height="9" fill="#d6d6d6" stroke="#a0a0a0"/></svg>
<div class="t" style="left:112px;top:532px;height:16px;line-height:16px;font-size:12px;letter-spacing:-0.021px;">Form Union</div>
<div class="t" style="left:178.6px;top:532px;height:16px;line-height:16px;font-size:12px;font-style:italic;letter-spacing:-0.067px;">(fin)</div>
<svg style="left:55.5px;top:552.5px;" width="8" height="10" viewBox="0 0 8 10"><path d="M2 1l4 4-4 4" fill="none" stroke="#5a5a5a" stroke-width="1.2"/></svg>
<svg style="left:70px;top:549.5px" width="16" height="16" viewBox="0 0 16 16"><g fill="#f2a33c"><rect x="6" y="1" width="4" height="4"/><rect x="1" y="4" width="4" height="4"/><rect x="11" y="4" width="4" height="4"/><rect x="6" y="6.500" width="4" height="4"/></g><g fill="#dd7a1c"><rect x="1" y="9.500" width="4" height="4"/><rect x="11" y="9.500" width="4" height="4"/><rect x="6" y="12" width="4" height="3.500"/></g></svg>
<div class="t" style="left:92px;top:550px;height:16px;line-height:16px;font-size:12px;letter-spacing:-0.085px;">Materials</div>
<svg style="left:55.5px;top:570.5px;" width="8" height="10" viewBox="0 0 8 10"><path d="M2 1l4 4-4 4" fill="none" stroke="#5a5a5a" stroke-width="1.2"/></svg>
<svg style="left:70px;top:567.5px" width="16" height="16" viewBox="0 0 16 16"><path d="M2 0l9 6.500-4 .8 7 6.200-10-6.500 4-.8z" fill="#4a7dba"/><path d="M1.500 13.500h4M3.500 11.500v4" stroke="#d81b60" stroke-width="1.100"/><path d="M11.500 13.500h4" stroke="#3b87c8" stroke-width="1.100"/></svg>
<div class="t" style="left:92px;top:568px;height:16px;line-height:16px;font-size:12px;letter-spacing:-0.199px;">Electric Currents</div>
<div class="t" style="left:181.4px;top:568px;height:16px;line-height:16px;font-size:12px;font-style:italic;letter-spacing:-1.022px;">(ec)</div>
<svg style="left:55.5px;top:588.5px;" width="8" height="10" viewBox="0 0 8 10"><path d="M2 1l4 4-4 4" fill="none" stroke="#5a5a5a" stroke-width="1.2"/></svg>
<svg style="left:70px;top:585.5px" width="16" height="16" viewBox="0 0 16 16"><path d="M1.800 2c-1.500 3 1 5-.3 12" fill="none" stroke="#e8833a" stroke-width="1.500"/><rect x="4" y="1.500" width="11.500" height="13" rx="2.500" fill="#3b87c8"/><path d="M6 13c1-5 3-8 5.500-8.500 1 3 2 5 2.500 8.500z" fill="#f2a33c"/><path d="M8 13c.8-3 2-5 3.500-5.500.7 2 1.300 3.500 1.500 5.500z" fill="#9bd05a"/></svg>
<div class="t" style="left:92px;top:586px;height:16px;line-height:16px;font-size:12px;letter-spacing:-0.270px;">Bioheat Transfer</div>
<div class="t" style="left:179.7px;top:586px;height:16px;line-height:16px;font-size:12px;font-style:italic;letter-spacing:-0.234px;">(ht)</div>
<svg style="left:55.5px;top:606.5px;" width="8" height="10" viewBox="0 0 8 10"><path d="M2 1l4 4-4 4" fill="none" stroke="#5a5a5a" stroke-width="1.2"/></svg>
<svg style="left:70px;top:603.5px" width="16" height="16" viewBox="0 0 16 16"><g fill="none" stroke="#9a9a9a" stroke-width=".7"><ellipse cx="8" cy="4.500" rx="1.700" ry="4.300"/><ellipse cx="8" cy="4.500" rx="1.700" ry="4.300" transform="rotate(60 8 4.500)"/><ellipse cx="8" cy="4.500" rx="1.700" ry="4.300" transform="rotate(-60 8 4.500)"/></g><path d="M2 12v-2h12v2M8 9v3" fill="none" stroke="#8a8a8a" stroke-width=".8"/><rect x="0" y="11.500" width="3.500" height="3.500" fill="#3b87c8"/><rect x="4.300" y="11.500" width="3.500" height="3.500" fill="#4aa84a"/><rect x="8.400" y="11.500" width="3.500" height="3.500" fill="#e2592a"/><rect x="12.500" y="11.500" width="3.500" height="3.500" fill="#d81b9a"/></svg>
<div class="t" style="left:92px;top:604px;height:16px;line-height:16px;font-size:12px;letter-spacing:0.114px;">Multiphysics</div>
<svg style="left:55.5px;top:624.5px;" width="8" height="10" viewBox="0 0 8 10"><path d="M2 1l4 4-4 4" fill="none" stroke="#5a5a5a" stroke-width="1.2"/></svg>
<svg style="left:70px;top:621.5px" width="16" height="16" viewBox="0 0 16 16"><path d="M8 1l7.500 13.500h-15z" fill="#cfcfcf" stroke="#8a8a8a" stroke-width="1"/><path d="M4.200 7.800h7.600M8 1l-3.800 6.800 3.800 6.700 3.800-6.700M6 4.500h4M2.300 11.200h11.400M6 4.500l4 6.700M10 4.500l-4 6.700" fill="none" stroke="#8a8a8a" stroke-width=".7"/></svg>
<div class="t" style="left:92px;top:622px;height:16px;line-height:16px;font-size:12px;letter-spacing:-0.470px;">Mesh 1</div>
<svg style="left:35.5px;top:642.5px;" width="8" height="10" viewBox="0 0 8 10"><path d="M2 1l4 4-4 4" fill="none" stroke="#5a5a5a" stroke-width="1.2"/></svg>
<svg style="left:50px;top:639.5px" width="16" height="16" viewBox="0 0 16 16"><g fill="none" stroke="#2196b5" stroke-width="1.100"><path d="M.5 7c1-2.500 2.500-2.500 4 0l1 1.500"/><circle cx="8" cy="9.500" r="2.300"/><circle cx="13.300" cy="9" r="2.300"/><path d="M10.200 9q.5-.6 1 0M11.500 5.500c1.500-1.500 3.500-.5 4 2"/></g></svg>
<div class="t" style="left:72px;top:640px;height:16px;line-height:16px;font-size:12px;letter-spacing:-0.449px;">Study 1</div>
<svg style="left:35.5px;top:660.5px;" width="8" height="10" viewBox="0 0 8 10"><path d="M2 1l4 4-4 4" fill="none" stroke="#5a5a5a" stroke-width="1.2"/></svg>
<svg style="left:50px;top:657.5px" width="16" height="16" viewBox="0 0 16 16"><path d="M0 8l2-1v4l4 4h-2l-4-4z" fill="#8a8a8a"/><g fill="#fff" stroke="#8a8a8a" stroke-width=".8"><rect x="2.500" y=".5" width="8" height="8"/><rect x="4.500" y="2.500" width="8" height="8"/><rect x="6.500" y="4.500" width="9" height="8"/></g><rect x="8" y="6" width="6" height="5" fill="#b0539f"/><path d="M6.500 12.500h9v3h-9z" fill="#fff" stroke="#8a8a8a" stroke-width=".8"/></svg>
<div class="t" style="left:72px;top:658px;height:16px;line-height:16px;font-size:12px;letter-spacing:-0.502px;">Results</div>
<!-- settings -->
<div style="left:427px;top:141px;width:495px;height:868px;background:#fafbfe;border:1px solid #d6d7db"></div>
<div style="left:428px;top:170px;width:493px;height:1px;background:#d6d7db"></div>
<div style="left:432px;top:147px;width:56px;height:24px;background:#fafbfe;border:1px solid #d6d7db;border-bottom:none"></div>
<div style="left:496px;top:147px;width:88px;height:23px;background:#ebebeb"></div>
<div class="t" style="left:437px;top:152px;height:17px;line-height:17px;font-size:13.3px;letter-spacing:-0.437px;color:#3f6db3">Settings</div>
<div class="t" style="left:500px;top:151px;height:17px;line-height:17px;font-size:13.3px;letter-spacing:-0.180px;">Properties</div>
<svg style="left:569px;top:154px;" width="9" height="9" viewBox="0 0 9 9"><path d="M.5 .5l8 8M8.500 .5l-8 8" stroke="#b5c3d6" stroke-width="1"/></svg>
<svg style="left:895px;top:156px;" width="8" height="6" viewBox="0 0 8 6"><path d="M0 1.2h8L4 5.2z" fill="#4d4f52"/></svg>
<svg style="left:910px;top:155px;" width="7" height="11" viewBox="0 0 7 11"><path d="M1 0h5v6h1v1h-3v3.500h-1v-3.500h-3v-1h1z" fill="#505255"/></svg>
<div class="t" style="left:434px;top:180px;height:18px;line-height:18px;font-size:14.6px;letter-spacing:-0.401px;color:#4a78ba">Move</div>
<svg style="left:436.5px;top:201.5px" width="13" height="13" viewBox="0 0 15 15"><path d="M.5 3l2-2.500h10l1.500 1.500v10l-1.500 1.500h-10.500l-1.500-1.500z" fill="#e9e9e9" stroke="#b5b5b5" stroke-width=".8"/><path d="M.5 3l2-2.500h5v6.500h-5.500l-1.500-1z" fill="#e8652f"/><path d="M2.500 2v11.500M2.500 7.500h11.500M7.500 1v12.500" stroke="#fff" stroke-width=".8" fill="none"/></svg>
<div class="t" style="left:455.5px;top:200px;height:16px;line-height:16px;font-size:12px;letter-spacing:-0.286px;">Build Selected</div>
<svg style="left:534.5px;top:205px;" width="8" height="6" viewBox="0 0 8 6"><path d="M0.5 1.2h7.0L4 4.7z" fill="#111"/></svg>
<svg style="left:555.5px;top:201.5px" width="13" height="13" viewBox="0 0 15 15"><path d="M.5 3l2-2.500h10l1.500 1.500v10l-1.500 1.500h-10.500l-1.500-1.500z" fill="#de6238"/><path d="M2.500 2.500v11M2.500 6h11.500M2.500 10h11.500M6.500 2v11.500M10.500 2v11.500M2.500 2.500h11" stroke="#f7c3ae" stroke-width=".8" fill="none"/></svg>
<div class="t" style="left:574px;top:200px;height:16px;line-height:16px;font-size:12px;letter-spacing:0.018px;">Build All Objects</div>
<svg style="left:668px;top:200.5px" width="14" height="14" viewBox="0 0 15.500 15.500"><rect x="3.500" y="3.500" width="11" height="11" fill="#3b87c8"/><path d="M9 3.500v11M3.500 9h11" stroke="#cfe2f3" stroke-width=".8"/><rect x=".7" y=".7" width="7" height="6" fill="none" stroke="#d81b9a" stroke-width="1.200"/></svg>
<div style="left:904px;top:221px;width:17px;height:787px;background:#f4f5f7"></div>
<div style="left:904px;top:238px;width:17px;height:682px;background:#e3e3e3"></div>
<svg style="left:908px;top:226px;" width="10" height="6" viewBox="0 0 10 6"><path d="M1 5.500l4-4 4 4" fill="none" stroke="#cfcfcf" stroke-width="1.200"/></svg>
<svg style="left:908px;top:997px;" width="10" height="6" viewBox="0 0 10 6"><path d="M1 .5l4 4 4-4" fill="none" stroke="#cfcfcf" stroke-width="1.200"/></svg>
<div class="t" style="left:433.5px;top:233px;height:16px;line-height:16px;font-size:12px;letter-spacing:-0.639px;">Label:</div>
<div style="left:474px;top:232px;width:397px;height:18px;background:#fff;border:1px solid #c9cacc"></div><div class="t" style="left:478px;top:233px;height:16px;line-height:16px;font-size:12px;">Move 1</div>
<div style="left:879px;top:230px;width:20px;height:22px;background:#ebebeb;border:1px solid #cfcfcf;border-radius:2px"></div><svg style="left:881.0px;top:233.0px" width="16" height="16" viewBox="0 0 16 16"><rect x="2.500" y="1.500" width="12" height="11" fill="#fff" stroke="#6a6a6a" stroke-width="1"/><rect x="2.500" y="1.500" width="12" height="2.500" fill="#c9c9c9" stroke="#6a6a6a"/><path d="M5.500 7h7M5.500 9.500h7" stroke="#1aa179" stroke-width="1.100"/><path d="M.5 14.500l4-4M1.500 10h3.500v3.500z" stroke="#1aa179" stroke-width="1.200" fill="#1aa179"/></svg>
<div style="left:428px;top:261px;width:476px;height:25.5px;background:#dee8f5"></div><svg style="left:433px;top:270.5px;" width="10" height="6" viewBox="0 0 10 6"><path d="M0 .3h9.500L4.750 5.700z" fill="#444"/></svg><div class="t" style="left:454px;top:267px;height:16px;line-height:16px;font-size:12.5px;letter-spacing:0.225px;">Input</div>
<div class="t" style="left:433px;top:296px;height:16px;line-height:16px;font-size:12px;letter-spacing:0.048px;">Input objects:</div>
<div style="left:432px;top:317px;width:40px;height:39.5px;background:#efefef;border:1px solid #dcdcdc;border-radius:2px"></div>
<svg style="left:437px;top:330px;" width="30" height="14" viewBox="0 0 26 12"><rect x=".7" y=".7" width="24.600" height="10.600" rx="1.500" fill="#f2f2f2" stroke="#3a5a8c" stroke-width="1.200"/><rect x="13" y="3" width="10" height="6" rx="1" fill="#b5b5b5"/><rect x="3" y="2.500" width="7.500" height="7" fill="#b5b5b5" stroke="#555" stroke-width="1"/></svg>
<div style="left:479px;top:317px;width:362px;height:119px;background:#fcfcfe;border:1px solid #d2d4d8;border-bottom:2px solid #cfcfcf"></div>
<div class="t" style="left:486px;top:321px;height:16px;line-height:16px;font-size:12px;">imp1</div>
<svg style="left:854px;top:317px" width="16" height="16" viewBox="0 0 16 16"><path d="M.5 .5h9v11h-9z" fill="#fff" stroke="#a8a8a8"/><path d="M2 3h1M2 5h1M2 7h1" stroke="#a8a8a8"/><path d="M5.500 4.500h10v11h-10z" fill="#fff" stroke="#3b87c8"/><path d="M7.500 8h6M7.500 10.500h6M7.500 13h6" stroke="#3b87c8"/></svg>
<svg style="left:884px;top:318px;" width="14" height="14" viewBox="0 0 14 14"><path d="M7 0v14M0 7h14" stroke="#3b87c8" stroke-width="1.200"/></svg>
<svg style="left:854px;top:337px" width="16" height="16" viewBox="0 0 16 16"><path d="M1.500 3.500h10v10h-10z" fill="#e9e9e9" stroke="#7a7a7a" stroke-width="1.200"/><path d="M4 1.500h5l.8 2.500h-6.600z" fill="#e0e0e0" stroke="#7a7a7a"/><path d="M7.500 7.500h8v8h-8z" fill="#fff" stroke="#3b87c8" stroke-width="1.200"/></svg>
<svg style="left:884px;top:338px;" width="14" height="14" viewBox="0 0 14 14"><path d="M0 7h14" stroke="#3b87c8" stroke-width="1.200"/></svg>
<svg style="left:854px;top:357px" width="16" height="16" viewBox="0 0 16 16"><rect x="4.500" y="4.500" width="7" height="7" fill="#fff" stroke="#7a7a7a" stroke-width="1.200"/><path d="M8 6.200v3.600M6.200 8h3.600" stroke="#555" stroke-width="1"/><path d="M8 0l1.800 2.200h-3.600zM8 16l1.800-2.200h-3.600zM0 8l2.200-1.800v3.600zM16 8l-2.200-1.800v3.600z" fill="#3b87c8"/></svg>
<svg style="left:883px;top:356.5px" width="16" height="16" viewBox="0 0 16 16"><path d="M1.500 2.500h13v11h-13z" fill="none" stroke="#3b87c8" stroke-width="1.300" stroke-dasharray="2.500 1.500"/><path d="M6 5h7v7z" fill="#3b87c8"/><path d="M1.500 .5l5 8" stroke="#7a6a55" stroke-width="1.500"/><path d="M5.500 7.500l3.500 1.500 2.500 6.500-5.500-.5-2-5z" fill="#f0a850"/></svg>
<div style="left:434px;top:443.5px;width:13.5px;height:13px;background:#ececec;border:1px solid #707070"></div>
<div class="t" style="left:453px;top:442px;height:16px;line-height:16px;font-size:12px;letter-spacing:-0.043px;">Keep input objects</div>
<div style="left:428px;top:469px;width:476px;height:25.5px;background:#dee8f5"></div><svg style="left:433px;top:478.5px;" width="10" height="6" viewBox="0 0 10 6"><path d="M0 .3h9.500L4.750 5.700z" fill="#444"/></svg><div class="t" style="left:454px;top:475px;height:16px;line-height:16px;font-size:12.5px;letter-spacing:0.161px;">Displacement</div>
<div class="t" style="left:433px;top:507px;height:16px;line-height:16px;font-size:12px;letter-spacing:-0.384px;">Specify:</div>
<div style="left:484px;top:504px;width:415px;height:21px;background:#e9e9e9;border:1px solid #c8c8c8;border-radius:2px"></div><div class="t" style="left:497px;top:507px;height:16px;line-height:16px;font-size:12px;color:#111">Displacement vector</div><svg style="left:884px;top:512.0px;" width="8" height="6" viewBox="0 0 8 6"><path d="M0.5 1.2h7.0L4 4.7z" fill="#111"/></svg>
<div class="t" style="left:433px;top:534px;height:16px;line-height:16px;font-size:12px;">x:</div>
<div style="left:484px;top:533px;width:355px;height:18px;background:#fff;border:1px solid #c9cacc"></div><div class="t" style="left:488px;top:534px;height:16px;line-height:16px;font-size:12px;">-35</div>
<div class="t" style="left:849.5px;top:534px;height:16px;line-height:16px;font-size:12px;letter-spacing:1.007px;">mm</div>
<div style="left:879px;top:531px;width:20px;height:22px;background:#ebebeb;border:1px solid #cfcfcf;border-radius:2px"></div><svg style="left:881.0px;top:534.0px" width="16" height="16" viewBox="0 0 16 16"><path d="M1.500 1.500v11.500" stroke="#4aa84a" stroke-width="1.200"/><path d="M15.300 1.500v11.500" stroke="#d81b60" stroke-width="1.200"/><path d="M2 12.500c0-3.500 3.500-3.500 3.700 0c0-3.500 3.500-3.500 3.700 0c0-3.500 3.500-3.500 3.700 0c0-2 1-2.500 2-2.500" fill="none" stroke="#8a8a8a" stroke-width="1"/><path d="M1 15.200h15" stroke="#3b87c8" stroke-width="1.100" stroke-dasharray="2.200 1"/></svg>
<div class="t" style="left:433px;top:562px;height:16px;line-height:16px;font-size:12px;">y:</div>
<div style="left:484px;top:561px;width:355px;height:18px;background:#fff;border:1px solid #c9cacc"></div><div class="t" style="left:488px;top:562px;height:16px;line-height:16px;font-size:12px;">77</div>
<div class="t" style="left:849.5px;top:562px;height:16px;line-height:16px;font-size:12px;letter-spacing:1.007px;">mm</div>
<div style="left:879px;top:559px;width:20px;height:22px;background:#ebebeb;border:1px solid #cfcfcf;border-radius:2px"></div><svg style="left:881.0px;top:562.0px" width="16" height="16" viewBox="0 0 16 16"><path d="M1.500 1.500v11.500" stroke="#4aa84a" stroke-width="1.200"/><path d="M15.300 1.500v11.500" stroke="#d81b60" stroke-width="1.200"/><path d="M2 12.500c0-3.500 3.500-3.500 3.700 0c0-3.500 3.500-3.500 3.700 0c0-3.500 3.500-3.500 3.700 0c0-2 1-2.500 2-2.500" fill="none" stroke="#8a8a8a" stroke-width="1"/><path d="M1 15.200h15" stroke="#3b87c8" stroke-width="1.100" stroke-dasharray="2.200 1"/></svg>
<div class="t" style="left:433px;top:590px;height:16px;line-height:16px;font-size:12px;">z:</div>
<div style="left:484px;top:589px;width:355px;height:18px;background:#fff;border:1px solid #c9cacc"></div><div class="t" style="left:488px;top:590px;height:16px;line-height:16px;font-size:12px;">325</div>
<div class="t" style="left:849.5px;top:590px;height:16px;line-height:16px;font-size:12px;letter-spacing:1.007px;">mm</div>
<div style="left:879px;top:587px;width:20px;height:22px;background:#ebebeb;border:1px solid #cfcfcf;border-radius:2px"></div><svg style="left:881.0px;top:590.0px" width="16" height="16" viewBox="0 0 16 16"><path d="M1.500 1.500v11.500" stroke="#4aa84a" stroke-width="1.200"/><path d="M15.300 1.500v11.500" stroke="#d81b60" stroke-width="1.200"/><path d="M2 12.500c0-3.500 3.500-3.500 3.700 0c0-3.500 3.500-3.500 3.700 0c0-3.500 3.500-3.500 3.700 0c0-2 1-2.500 2-2.500" fill="none" stroke="#8a8a8a" stroke-width="1"/><path d="M1 15.200h15" stroke="#3b87c8" stroke-width="1.100" stroke-dasharray="2.200 1"/></svg>
<div style="left:428px;top:620px;width:476px;height:25.5px;background:#dee8f5"></div><svg style="left:433px;top:629.5px;" width="10" height="6" viewBox="0 0 10 6"><path d="M0 .3h9.500L4.750 5.700z" fill="#444"/></svg><div class="t" style="left:454px;top:626px;height:16px;line-height:16px;font-size:12.5px;letter-spacing:0.212px;">Coordinate System</div>
<div class="t" style="left:433px;top:659px;height:16px;line-height:16px;font-size:12px;letter-spacing:-0.281px;">Work plane:</div>
<div style="left:506px;top:656px;width:365px;height:21px;background:#e9e9e9;border:1px solid #c8c8c8;border-radius:2px"></div><div class="t" style="left:519px;top:659px;height:16px;line-height:16px;font-size:12px;color:#111">xy-plane</div><svg style="left:856px;top:664.0px;" width="8" height="6" viewBox="0 0 8 6"><path d="M0.5 1.2h7.0L4 4.7z" fill="#111"/></svg>
<div style="left:879px;top:655px;width:20px;height:23px;background:#f3f3f3;border:1px solid #e4e4e4;border-radius:2px"></div><svg style="left:881.0px;top:658.5px" width="16" height="16" viewBox="0 0 16 16"><path d="M2 1h6M2 4h4M2 7h6M2 10h4M2 13h6" stroke="#cfcfcf" stroke-width="1"/><path d="M9.500 6h5v8h-5zM12 6v-3M10.500 4.500l1.500-2 1.500 2" fill="none" stroke="#cfcfcf" stroke-width="1"/></svg>
<div style="left:428px;top:688px;width:476px;height:25.5px;background:#dee8f5"></div><svg style="left:433px;top:697.5px;" width="10" height="6" viewBox="0 0 10 6"><path d="M0 .3h9.500L4.750 5.700z" fill="#444"/></svg><div class="t" style="left:454px;top:694px;height:16px;line-height:16px;font-size:12.5px;letter-spacing:0.135px;">Selections of Resulting Entities</div>
<div style="left:431px;top:731px;width:470px;height:68px;border:1px solid #dcdcdc"></div>
<div style="left:437px;top:722px;width:165px;height:16px;background:#fafbfe"></div>
<div style="left:440px;top:723.5px;width:13.5px;height:13px;background:#ececec;border:1px solid #707070"></div>
<div class="t" style="left:459px;top:722px;height:16px;line-height:16px;font-size:12px;letter-spacing:-0.118px;">Resulting objects selection</div>
<div class="t" style="left:440px;top:747px;height:16px;line-height:16px;font-size:12px;letter-spacing:-0.225px;color:#6d6d6d">Show in physics:</div>
<div style="left:537px;top:744px;width:355px;height:21px;background:#f2f2f3;border:1px solid #e9e9e9;border-radius:2px"></div><div class="t" style="left:550px;top:747px;height:16px;line-height:16px;font-size:12px;color:#9a9a9a">Domain selection</div><svg style="left:877px;top:752.0px;" width="8" height="6" viewBox="0 0 8 6"><path d="M0.5 1.2h7.0L4 4.7z" fill="#e6e6e6"/></svg>
<div class="t" style="left:440px;top:774px;height:16px;line-height:16px;font-size:12px;letter-spacing:-0.202px;color:#6d6d6d">Color:</div>
<div style="left:537px;top:771px;width:355px;height:21px;background:#f2f2f3;border:1px solid #e9e9e9;border-radius:2px"></div><div class="t" style="left:550px;top:774px;height:16px;line-height:16px;font-size:12px;color:#9a9a9a">None</div><svg style="left:877px;top:779.0px;" width="8" height="6" viewBox="0 0 8 6"><path d="M0.5 1.2h7.0L4 4.7z" fill="#e6e6e6"/></svg>
<div style="left:433px;top:812.5px;width:466px;height:1px;background:#dcdcdc"></div>
<div style="left:443px;top:805px;width:118px;height:15px;background:#fafbfe"></div>
<div class="t" style="left:446px;top:805px;height:16px;line-height:16px;font-size:12px;letter-spacing:-0.012px;">Cumulative selection</div>
<div class="t" style="left:433px;top:830px;height:16px;line-height:16px;font-size:12px;letter-spacing:0.112px;">Contribute to:</div>
<div style="left:517px;top:827px;width:316px;height:21px;background:#e9e9e9;border:1px solid #c8c8c8;border-radius:2px"></div><div class="t" style="left:530px;top:830px;height:16px;line-height:16px;font-size:12px;color:#111">None</div><svg style="left:818px;top:835.0px;" width="8" height="6" viewBox="0 0 8 6"><path d="M0.5 1.2h7.0L4 4.7z" fill="#111"/></svg>
<div style="left:841px;top:825px;width:60px;height:19px;background:#ebebeb;border:1px solid #cfcfcf;border-radius:2px"></div>
<div class="t" style="left:859.5px;top:827px;height:16px;line-height:16px;font-size:12px;letter-spacing:-0.503px;">New</div>
<div style="left:428px;top:859px;width:476px;height:25.5px;background:#dee8f5"></div><svg style="left:433px;top:868.5px;" width="10" height="6" viewBox="0 0 10 6"><path d="M0 .3h9.500L4.750 5.700z" fill="#444"/></svg><div class="t" style="left:454px;top:865px;height:16px;line-height:16px;font-size:12.5px;letter-spacing:0.205px;">Selections on Input Objects</div>
<div style="left:434px;top:895.0px;width:13.5px;height:13px;background:#ececec;border:1px solid #707070"></div><svg style="left:436px;top:896.5px;" width="10" height="10" viewBox="0 0 10 10"><path d="M1 5l3 3.500 5-7.500" fill="none" stroke="#111" stroke-width="1.600"/></svg>
<div class="t" style="left:453px;top:894px;height:16px;line-height:16px;font-size:12px;letter-spacing:-0.062px;">Propagate selections to resulting objects</div>
<div style="left:428px;top:920px;width:476px;height:25.5px;background:#dee8f5"></div><svg style="left:433px;top:929.5px;" width="10" height="6" viewBox="0 0 10 6"><path d="M0 .3h9.500L4.750 5.700z" fill="#444"/></svg><div class="t" style="left:454px;top:926px;height:16px;line-height:16px;font-size:12.5px;letter-spacing:0.299px;">Assigned Attributes</div>
<div class="t" style="left:433px;top:955px;height:16px;line-height:16px;font-size:12px;letter-spacing:0.069px;">Construction geometry:</div>
<div style="left:433px;top:976px;width:466px;height:21px;background:#e9e9e9;border:1px solid #c8c8c8;border-radius:2px"></div><div class="t" style="left:446px;top:979px;height:16px;line-height:16px;font-size:12px;color:#111">Inherit from input</div><svg style="left:884px;top:984.0px;" width="8" height="6" viewBox="0 0 8 6"><path d="M0.5 1.2h7.0L4 4.7z" fill="#111"/></svg>
<!-- graphics -->
<div style="left:927px;top:141px;width:640px;height:581px;background:#fafbfe;border:1px solid #9fcdf2"></div>
<div style="left:928px;top:170px;width:638px;height:1px;background:#d6d7db"></div>
<div style="left:932px;top:147px;width:61px;height:24px;background:#fafbfe;border:1px solid #d6d7db;border-bottom:none"></div><div class="t" style="left:937px;top:152px;height:17px;line-height:17px;font-size:13.3px;letter-spacing:-0.460px;color:#2b8de8">Graphics</div>
<div style="left:1001px;top:147px;width:141px;height:23px;background:#ebebeb"></div><div class="t" style="left:1005.5px;top:151px;height:17px;line-height:17px;font-size:13.3px;letter-spacing:-0.284px;">Convergence Plot 1</div><svg style="left:1125.5px;top:153.5px;" width="9" height="9" viewBox="0 0 9 9"><path d="M.5 .5l8 8M8.500 .5l-8 8" stroke="#b5c3d6" stroke-width="1"/></svg>
<div style="left:1150px;top:147px;width:99.5px;height:23px;background:#ebebeb"></div><div class="t" style="left:1154px;top:151px;height:17px;line-height:17px;font-size:13.3px;letter-spacing:-0.154px;">Probe Plot 1</div><svg style="left:1234.0px;top:153.5px;" width="9" height="9" viewBox="0 0 9 9"><path d="M.5 .5l8 8M8.500 .5l-8 8" stroke="#b5c3d6" stroke-width="1"/></svg>
<div style="left:1258.5px;top:147px;width:99.0px;height:23px;background:#ebebeb"></div><div class="t" style="left:1262.5px;top:151px;height:17px;line-height:17px;font-size:13.3px;letter-spacing:-0.154px;">Probe Plot 2</div><svg style="left:1342.0px;top:153.5px;" width="9" height="9" viewBox="0 0 9 9"><path d="M.5 .5l8 8M8.500 .5l-8 8" stroke="#b5c3d6" stroke-width="1"/></svg>
<div style="left:1366px;top:147px;width:140px;height:23px;background:#ebebeb"></div><div class="t" style="left:1370.5px;top:151px;height:17px;line-height:17px;font-size:13.3px;letter-spacing:-0.254px;">Convergence Plot 2</div><svg style="left:1491.0px;top:153.5px;" width="9" height="9" viewBox="0 0 9 9"><path d="M.5 .5l8 8M8.500 .5l-8 8" stroke="#b5c3d6" stroke-width="1"/></svg>
<svg style="left:1540px;top:156px;" width="8" height="6" viewBox="0 0 8 6"><path d="M0 1.2h8L4 5.2z" fill="#3b87c8"/></svg>
<svg style="left:1555px;top:155px;" width="7" height="11" viewBox="0 0 7 11"><path d="M1 0h5v6h1v1h-3v3.500h-1v-3.500h-3v-1h1z" fill="#3b87c8"/></svg>
<div style="left:928px;top:219px;width:638px;height:502px;background:linear-gradient(#fafbfe,#e5f0fd)"></div>
<svg style="left:936px;top:177.5px" width="16" height="16" viewBox="0 0 16 16"><circle cx="6" cy="6" r="4.800" fill="#fff" stroke="#3b87c8" stroke-width="1.400"/><path d="M9.600 9.600l4.400 4.400" stroke="#3b87c8" stroke-width="1.900"/><path d="M3.500 6h5M6 3.500v5" stroke="#3b87c8" stroke-width="1.200"/></svg>
<svg style="left:959px;top:177.5px" width="16" height="16" viewBox="0 0 16 16"><circle cx="6" cy="6" r="4.800" fill="#fff" stroke="#3b87c8" stroke-width="1.400"/><path d="M9.600 9.600l4.400 4.400" stroke="#3b87c8" stroke-width="1.900"/><path d="M3.500 6h5" stroke="#3b87c8" stroke-width="1.200"/></svg>
<svg style="left:981px;top:177.5px" width="16" height="16" viewBox="0 0 16 16"><rect x=".7" y="6" width="8" height="8" fill="none" stroke="#3b87c8" stroke-width="1.200" stroke-dasharray="2 1.300"/><circle cx="8.500" cy="5.500" r="4.300" fill="#fff" stroke="#3b87c8" stroke-width="1.400"/><path d="M11.700 8.700l4 4.300" stroke="#3b87c8" stroke-width="1.900"/><path d="M6.300 5.500h4.400M8.500 3.300v4.400" stroke="#3b87c8" stroke-width="1.100"/></svg>
<svg style="left:1022px;top:177.5px" width="16" height="16" viewBox="0 0 16 16"><rect x="4.500" y="4.500" width="7" height="7" fill="#fff" stroke="#7a7a7a" stroke-width="1.200"/><path d="M8 6.200v3.600M6.200 8h3.600" stroke="#555" stroke-width="1"/><path d="M8 0l1.800 2.200h-3.600zM8 16l1.800-2.200h-3.600zM0 8l2.200-1.800v3.600zM16 8l-2.200-1.800v3.600z" fill="#3b87c8"/></svg>
<svg style="left:1045px;top:177.5px" width="16" height="16" viewBox="0 0 16 16"><rect x=".6" y=".6" width="14.800" height="14.800" fill="#fff" stroke="#7a7a7a" stroke-width="1.200"/><path d="M8 4.500v7M4.500 8h7" stroke="#555" stroke-width="1"/><path d="M8 1.500l2 2.500h-4zM8 14.500l2-2.500h-4zM1.500 8l2.500-2v4zM14.500 8l-2.500-2v4z" fill="#3b87c8"/></svg>
<svg style="left:1076px;top:177.5px" width="16" height="16" viewBox="0 0 16 16"><path d="M7 11.500v-10.500M5 3.500l2-3 2 3" fill="none" stroke="#3b87c8" stroke-width="1.200"/><path d="M7 12l8-4M12 7l3.500.8-2 3" fill="none" stroke="#d81b60" stroke-width="1.200"/><path d="M7 12l-6-4.500M1 10.500v-3.200l3 .3" fill="none" stroke="#4aa84a" stroke-width="1.200"/></svg>
<svg style="left:1118px;top:177.5px" width="16" height="16" viewBox="0 0 16 16"><path d="M2 1v12.500" stroke="#4aa84a" stroke-width="1.200"/><path d="M.3 3l1.700-2.800 1.700 2.800z" fill="#4aa84a"/><path d="M2 13.500h12" stroke="#d81b60" stroke-width="1.200"/><path d="M13 11.800l2.800 1.700-2.800 1.700z" fill="#d81b60"/><text x="4.500" y="9" font-size="8.500" font-family="Liberation Sans, sans-serif" fill="#8a8a8a">xy</text></svg>
<svg style="left:1141px;top:177.5px" width="16" height="16" viewBox="0 0 16 16"><path d="M2 1v12.500" stroke="#3b87c8" stroke-width="1.200"/><path d="M.3 3l1.700-2.800 1.700 2.800z" fill="#3b87c8"/><path d="M2 13.500h12" stroke="#4aa84a" stroke-width="1.200"/><path d="M13 11.800l2.800 1.700-2.800 1.700z" fill="#4aa84a"/><text x="4.500" y="9" font-size="8.500" font-family="Liberation Sans, sans-serif" fill="#8a8a8a">yz</text></svg>
<svg style="left:1164px;top:177.5px" width="16" height="16" viewBox="0 0 16 16"><path d="M2 1v12.500" stroke="#3b87c8" stroke-width="1.200"/><path d="M.3 3l1.700-2.800 1.700 2.800z" fill="#3b87c8"/><path d="M2 13.500h12" stroke="#d81b60" stroke-width="1.200"/><path d="M13 11.800l2.800 1.700-2.800 1.700z" fill="#d81b60"/><text x="4.500" y="9" font-size="8.500" font-family="Liberation Sans, sans-serif" fill="#8a8a8a">xz</text></svg>
<svg style="left:1218px;top:177.5px" width="16" height="16" viewBox="0 0 16 16"><path d="M13.500 9a5.500 5.500 0 1 1-4-5.300" fill="none" stroke="#3b87c8" stroke-width="1.500"/><path d="M8.500 0l5 3.700-5 3.500z" fill="#3b87c8"/></svg>
<svg style="left:1265px;top:177.5px" width="16" height="16" viewBox="0 0 16 16"><rect x=".6" y=".6" width="10" height="9" rx="2" fill="#d6d6d6" stroke="#a6a6a6"/><rect x="4.500" y="6" width="11" height="9.500" rx="2" fill="#3b87c8"/><path d="M6.500 6.200c-1 3-1 6 0 9" stroke="#9cc4e8" stroke-width=".8" fill="none"/></svg>
<svg style="left:1314px;top:177.5px" width="16" height="16" viewBox="0 0 16 16"><rect x=".6" y="4.500" width="14.800" height="10" rx="3.500" fill="#d9d9d9" stroke="#9a9a9a" stroke-width="1"/><path d="M1 9.500h14" stroke="#9a9a9a" stroke-width=".8"/><rect x="5.500" y=".7" width="8" height="7" fill="#cfe0f0" stroke="#3b87c8" stroke-width="1.200" stroke-dasharray="2 1.200"/><rect x="7.500" y="2.500" width="4" height="3.500" fill="#3b87c8"/></svg>
<svg style="left:1355px;top:177.5px" width="16" height="16" viewBox="0 0 16 16"><rect x=".6" y="4.500" width="14.800" height="10" rx="3.500" fill="#3b87c8"/><rect x="5.500" y=".7" width="8" height="7" fill="#e6e6e6" stroke="#3b87c8" stroke-width="1.200" stroke-dasharray="2 1.200"/><rect x="7.500" y="2.500" width="4" height="3.500" fill="#c9c9c9"/></svg>
<svg style="left:1397px;top:177.5px" width="16" height="16" viewBox="0 0 16 16"><path d="M1 1.500h13v11h-13z" fill="none" stroke="#3b87c8" stroke-width="1.300" stroke-dasharray="2.500 1.500"/><path d="M4 4.500h8v5h-8z" fill="#3b87c8"/><path d="M8.500 8l2 7 1.500-2.500 3 3 1-1-3-3 2.500-1.500z" fill="#3a6fb0" stroke="#fff" stroke-width=".5"/></svg>
<svg style="left:1419px;top:177.5px" width="16" height="16" viewBox="0 0 16 16"><path d="M1.500 2.500h13v11h-13z" fill="none" stroke="#3b87c8" stroke-width="1.300" stroke-dasharray="2.500 1.500"/><path d="M6 5h7v7z" fill="#3b87c8"/><path d="M1.500 .5l5 8" stroke="#7a6a55" stroke-width="1.500"/><path d="M5.500 7.500l3.500 1.500 2.500 6.500-5.500-.5-2-5z" fill="#f0a850"/></svg>
<svg style="left:1450px;top:177.5px" width="16" height="16" viewBox="0 0 16 16"><path d="M1 8c3-4.500 11-4.500 14 0-3 4.500-11 4.500-14 0z" fill="none" stroke="#3b87c8" stroke-width="1.300"/><path d="M3 13.500l10-11" stroke="#fafbfe" stroke-width="3"/><path d="M3.500 13l9.500-10.500" stroke="#3b87c8" stroke-width="1.300"/></svg>
<svg style="left:1473px;top:177.5px" width="16" height="16" viewBox="0 0 16 16"><path d="M4.500 6.500a4 4 0 1 1 4 2.500v2" fill="none" stroke="#3b87c8" stroke-width="1.400"/><path d="M2 2.500l1 5 4.500-2z" fill="#3b87c8"/><ellipse cx="4" cy="13" rx="3.500" ry="1.800" fill="none" stroke="#3b87c8" stroke-width="1.200"/><circle cx="4" cy="13" r="1" fill="#3b87c8"/><ellipse cx="12.500" cy="13.500" rx="3" ry="1.600" fill="none" stroke="#3b87c8" stroke-width="1"/><path d="M10 15.500l5-4" stroke="#3b87c8" stroke-width="1"/></svg>
<svg style="left:1496px;top:177.5px" width="16" height="16" viewBox="0 0 16 16"><rect x=".7" y=".7" width="14.600" height="14.600" fill="#fff" stroke="#3b87c8" stroke-width="1.300"/><path d="M.7 3h14.600" stroke="#3b87c8" stroke-width="1.300"/><ellipse cx="8" cy="6.500" rx="3.500" ry="1.700" fill="none" stroke="#3b87c8" stroke-width="1.100"/><circle cx="8" cy="6.500" r=".9" fill="#3b87c8"/><ellipse cx="8" cy="11.500" rx="3.500" ry="1.700" fill="none" stroke="#3b87c8" stroke-width="1.100"/><path d="M5 13.500l6-4" stroke="#3b87c8" stroke-width="1.100"/></svg>
<div style="left:1184px;top:176px;width:20px;height:20px;background:#a9d3f5;border:1px solid #4ba3ec;border-radius:2px"></div>
<svg style="left:1186.5px;top:178px" width="16" height="16" viewBox="0 0 16 16"><path d="M1 1.500h6v13h-6z" fill="#3b87c8"/><path d="M7 6h2l5-3.500v11l-5-3.500h-2z" fill="#d9e9f7" stroke="#3b87c8" stroke-width="1"/><path d="M9.500 6v4" stroke="#3b87c8"/></svg>
<svg style="left:1002.5px;top:182.5px;" width="8" height="6" viewBox="0 0 8 6"><path d="M0.5 1.2h7.0L4 4.7z" fill="#111"/></svg>
<svg style="left:1097.5px;top:182.5px;" width="8" height="6" viewBox="0 0 8 6"><path d="M0.5 1.2h7.0L4 4.7z" fill="#111"/></svg>
<svg style="left:1237.5px;top:182.5px;" width="8" height="6" viewBox="0 0 8 6"><path d="M0.5 1.2h7.0L4 4.7z" fill="#111"/></svg>
<svg style="left:1286.5px;top:182.5px;" width="8" height="6" viewBox="0 0 8 6"><path d="M0.5 1.2h7.0L4 4.7z" fill="#111"/></svg>
<svg style="left:1335.5px;top:182.5px;" width="8" height="6" viewBox="0 0 8 6"><path d="M0.5 1.2h7.0L4 4.7z" fill="#111"/></svg>
<svg style="left:1376.5px;top:182.5px;" width="8" height="6" viewBox="0 0 8 6"><path d="M0.5 1.2h7.0L4 4.7z" fill="#111"/></svg>
<svg style="left:1517.5px;top:182.5px;" width="8" height="6" viewBox="0 0 8 6"><path d="M0.5 1.2h7.0L4 4.7z" fill="#111"/></svg>
<div style="left:1068px;top:178px;width:1px;height:15.5px;background:#c9cacc"></div>
<div style="left:1209px;top:178px;width:1px;height:15.5px;background:#c9cacc"></div>
<div style="left:1257px;top:178px;width:1px;height:15.5px;background:#c9cacc"></div>
<div style="left:1306.5px;top:178px;width:1px;height:15.5px;background:#c9cacc"></div>
<div style="left:1442.5px;top:178px;width:1px;height:15.5px;background:#c9cacc"></div>
<div style="left:1537.5px;top:178px;width:1px;height:15.5px;background:#c9cacc"></div>
<div style="left:973px;top:196px;width:38px;height:20px;background:#a9d3f5;border:1px solid #4ba3ec;border-radius:2px"></div>
<div style="left:992px;top:198px;width:1px;height:16px;background:#4ba3ec"></div>
<div style="left:1055px;top:196px;width:20px;height:20px;background:#a9d3f5;border:1px solid #4ba3ec;border-radius:2px"></div>
<div style="left:1078px;top:196px;width:20px;height:20px;background:#a9d3f5;border:1px solid #4ba3ec;border-radius:2px"></div>
<div style="left:1101px;top:196px;width:20px;height:20px;background:#a9d3f5;border:1px solid #4ba3ec;border-radius:2px"></div>
<svg style="left:935px;top:198px" width="16" height="16" viewBox="0 0 16 16"><path d="M.5 4.500h10.500v11h-10.500zM4.500 .5h10.500v11h-10.500zM.5 4.500l4-4M11 4.500l4-4M.5 15.500l4-4M11 15.500l4-4" fill="none" stroke="#7a7a7a" stroke-width="1"/><path d="M7 0l5 16" stroke="#3b87c8" stroke-width="1"/></svg>
<svg style="left:1017px;top:198px" width="16" height="16" viewBox="0 0 16 16"><path d="M.5 3.500l2.500-3h11.500v9.500l-2.500 3.500h-11.500z" fill="#cfe0f0" stroke="#3b87c8" stroke-width="1"/><path d="M.5 3.500h11.500v10M12 3.500l2.500-3" fill="none" stroke="#3b87c8" stroke-width="1"/></svg>
<svg style="left:1057px;top:198px" width="16" height="16" viewBox="0 0 16 16"><rect x=".6" y="1.600" width="14.800" height="12.800" fill="none" stroke="#3b87c8" stroke-width="1.200"/><path d="M3.500 4.500h9v7h-9zM.6 1.600l2.900 2.900M15.400 1.600l-2.900 2.900M.6 14.400l2.900-2.900M15.400 14.400l-2.900-2.900" fill="none" stroke="#3b87c8" stroke-width="1.100"/></svg>
<svg style="left:1080px;top:198px" width="16" height="16" viewBox="0 0 16 16"><rect x=".6" y="1.600" width="14.800" height="12.800" fill="#d9e9f7" stroke="#7a7a7a" stroke-width="1.200"/><path d="M8 10v-6M6.800 5.500l1.200-2 1.200 2" stroke="#3b87c8" stroke-width="1" fill="none"/><path d="M8 10l4.500-2.500" stroke="#d81b60" stroke-width="1.100"/><path d="M8 10l-4-2.500" stroke="#4aa84a" stroke-width="1.100"/></svg>
<svg style="left:1103px;top:198px" width="16" height="16" viewBox="0 0 16 16"><rect x=".6" y="1.600" width="14.800" height="12.800" fill="#d9e9f7" stroke="#7a7a7a" stroke-width="1.200"/><path d="M3.500 4h9v8.500h-9zM6.500 4v8.500M9.500 4v8.500M3.500 6.800h9M3.500 9.700h9" fill="none" stroke="#3b87c8" stroke-width="1.100"/></svg>
<svg style="left:1134px;top:198px" width="16" height="16" viewBox="0 0 16 16"><path d="M.5 2l3-1.500h11v3l-3 1.500h-11z" fill="#e6e6e6" stroke="#9a9a9a" stroke-width=".8"/><rect x="2" y="4.500" width="12.500" height="4" fill="#3b87c8"/><circle cx="8.500" cy="12" r="3" fill="#fff" stroke="#d81b60" stroke-width="1.300"/><path d="M6.500 14l4-4" stroke="#d81b60" stroke-width="1.300"/></svg>
<svg style="left:1158px;top:198px" width="16" height="16" viewBox="0 0 16 16"><path d="M9 .7c-5 0-8.300 3.300-8.300 8 0 4 2.300 6.600 5.300 6.600 2 0 2.500-1.500 2-3-.5-2 .5-3 2.500-3 3 0 4.800-1.300 4.800-3.600 0-3-2.800-5-6.300-5z" fill="#e6e6e6" stroke="#7a7a7a" stroke-width="1.200"/><circle cx="4.500" cy="11.500" r="1.300" fill="#d81b60"/><circle cx="7.500" cy="9.500" r="1.200" fill="#e8833a"/><circle cx="10.500" cy="7.500" r="1.200" fill="#e8833a"/><circle cx="11.500" cy="4" r="1.200" fill="#3b87c8"/><circle cx="6" cy="4.500" r="1.700" fill="#fff" stroke="#7a7a7a"/></svg>
<svg style="left:1205.5px;top:198px" width="16" height="16" viewBox="0 0 16 16"><circle cx="8" cy="8" r="6" fill="none" stroke="#3b87c8" stroke-width="3.500" stroke-dasharray="4.500 1.800"/></svg>
<svg style="left:1246px;top:198px" width="16" height="16" viewBox="0 0 16 16"><path d="M0 3.500h4l1.500-2h5l1.500 2h4v10h-16z" fill="#3b87c8"/><circle cx="8" cy="8.300" r="3" fill="#fff"/><circle cx="8" cy="8.300" r="1.300" fill="#3b87c8"/></svg>
<svg style="left:1269.5px;top:198px" width="16" height="16" viewBox="0 0 16 16"><rect x="3" y=".6" width="9" height="5" fill="#fff" stroke="#3b87c8" stroke-width="1.200"/><rect x=".6" y="5" width="13.800" height="7" rx="1.200" fill="#b9d2ea" stroke="#3b87c8" stroke-width="1.200"/><rect x="3" y="10" width="9" height="5.400" fill="#fff" stroke="#3b87c8" stroke-width="1.200"/></svg>
<svg style="left:977px;top:199.5px;" width="12" height="14" viewBox="0 0 12 14"><path d="M0 5h4l6-4.500v13l-6-4.500h-4z" fill="#3b87c8"/><path d="M10 5a2.500 2.500 0 0 1 0 4" fill="#cfe2f3" stroke="#3b87c8" stroke-width=".8"/></svg>
<svg style="left:955.5px;top:203px;" width="8" height="6" viewBox="0 0 8 6"><path d="M0.5 1.2h7.0L4 4.7z" fill="#111"/></svg>
<svg style="left:996.5px;top:203px;" width="8" height="6" viewBox="0 0 8 6"><path d="M0.5 1.2h7.0L4 4.7z" fill="#111"/></svg>
<svg style="left:1037.5px;top:203px;" width="8" height="6" viewBox="0 0 8 6"><path d="M0.5 1.2h7.0L4 4.7z" fill="#111"/></svg>
<svg style="left:1177.5px;top:203px;" width="8" height="6" viewBox="0 0 8 6"><path d="M0.5 1.2h7.0L4 4.7z" fill="#111"/></svg>
<svg style="left:1226.5px;top:203px;" width="8" height="6" viewBox="0 0 8 6"><path d="M0.5 1.2h7.0L4 4.7z" fill="#111"/></svg>
<div style="left:1126.5px;top:198px;width:1px;height:15.5px;background:#c9cacc"></div>
<div style="left:1197px;top:198px;width:1px;height:15.5px;background:#c9cacc"></div>
<svg style="left:928px;top:219px;overflow:hidden" width="638" height="502" viewBox="0 0 638 502"><path d="M423.1 251.6C427.9 251.9 436.1 252.8 440.9 254.9C445.7 257.0 449.3 260.9 452.0 264.3C454.7 267.7 456.2 272.2 457.0 275.4C457.8 278.5 457.8 279.5 457.0 283.2C456.2 286.9 454.3 292.9 452.0 297.7C449.7 302.5 446.4 308.0 443.1 312.1C439.8 316.2 436.1 319.6 432.0 322.1C427.9 324.6 423.5 326.0 418.7 327.1C413.9 328.2 407.9 329.1 403.1 328.8C398.3 328.5 393.5 327.1 389.8 325.4C386.1 323.7 383.2 321.4 380.9 318.8C378.6 316.2 376.9 313.0 375.9 309.9C374.9 306.8 374.8 303.8 374.8 299.9C374.8 296.0 375.2 289.9 375.9 286.6C376.5 283.3 376.6 282.9 378.7 279.9C380.8 276.9 385.2 272.3 388.7 268.8C392.2 265.3 395.9 261.4 399.8 258.8C403.7 256.2 408.1 254.4 412.0 253.2C415.9 252.0 418.3 251.3 423.1 251.6Z" fill="#f7b5ba"/><g stroke="#8e8e8e" stroke-width=".95" fill="none"><path d="M112.8 0.0L112.8 260.6"/><path d="M192.8 0.0L192.8 230.3"/><path d="M273.2 0.0L273.2 199.5"/><path d="M320.4 0.0L320.4 195.6"/><path d="M380.5 0.0L380.5 236.5"/><path d="M440.7 0.0L440.7 277.5"/><path d="M112.8 113.3L289.5 45.4"/><path d="M320.4 47.8L494.2 166.7"/><path d="M126.8 289.5L302.5 221.6"/><path d="M126.8 289.5L299.2 408.4"/><path d="M207.2 259.2L379.6 377.6"/><path d="M286.7 228.4L459.0 347.3"/><path d="M187.0 330.9L362.7 263.0"/><path d="M246.2 371.8L422.9 304.0"/></g><path d="M44 458v-18" stroke="#3b78b4" stroke-width="1.600"/><path d="M41 441.500l3-9 3 9z" fill="#3b78b4"/><path d="M44 458l19-6.500" stroke="#d81b60" stroke-width="1.600"/><path d="M61 447.500l8 2-6.500 5z" fill="#d81b60"/><path d="M44 458l-13-9" stroke="#4aa84a" stroke-width="1.600"/><path d="M26 445l8.500 1-4.500 6z" fill="#4aa84a"/><g font-family="DejaVu Sans, sans-serif" font-size="11.500" fill="#111"><text x="506" y="173">-200</text><text x="461" y="365.500">50</text><text x="383" y="396.500">0</text><text x="300" y="428">-50</text><text x="401" y="420" font-size="10.500">mm</text><text x="40.500" y="429" font-size="12">z</text><text x="18" y="444" font-size="12">y</text><text x="70" y="449" font-size="12">x</text><text x="509" y="1">-300</text></g><text x="22" y="66" font-family="DejaVu Sans, sans-serif" font-size="11.500" fill="#e8202a">imp1</text><path d="M7 62h11M15 59l3.500 3-3.500 3" stroke="#111" stroke-width="1" fill="none"/></svg>
<svg style="left:1540px;top:224px;" width="22" height="20" viewBox="0 0 22 20"><ellipse cx="11" cy="10" rx="10.500" ry="8.500" fill="#ebebf0"/><path d="M3 7l12-4 1 1 4 9-9 5-5-1z" fill="#e4e4ea"/><rect x="3.500" y="3.700" width="15" height="12" rx="2.200" fill="#fdfdf6"/><rect x="4" y="4.200" width="14" height="11" rx="2" fill="#2446c0"/><path d="M9 4.200h7a2 2 0 0 1 2 2v4.300l-5-2.500z" fill="#15168c"/><path d="M4 6.200a2 2 0 0 1 1.500-1.900v10.800a2 2 0 0 1-1.500-1.900z" fill="#3d74e6"/><path d="M6.800 6.500l7.500 3.800-4 1-1.500 2.800h-2z" fill="#f3e64e"/><path d="M8 6.800l4.500 2.700-3 .5z" fill="#b8e68a"/><path d="M10.500 11.300l7.500-1.300v2.500l-8.500 1.700z" fill="#3aa8f2"/><path d="M5.500 14.300h11.500a2 2 0 0 1-1 .9h-9.500z" fill="#10106e"/></svg>
<!-- right -->
<div style="left:1572px;top:141px;width:345px;height:581px;background:#fafbfe;border:1px solid #d6d7db"></div>
<div style="left:1573px;top:170px;width:343px;height:1px;background:#d6d7db"></div>
<div style="left:1577px;top:147px;width:145px;height:23px;background:#ebebeb"></div><div class="t" style="left:1581px;top:151px;height:17px;line-height:17px;font-size:13.3px;letter-spacing:-0.073px;">Add Predefined Plot</div><svg style="left:1706.0px;top:153.5px;" width="9" height="9" viewBox="0 0 9 9"><path d="M.5 .5l8 8M8.500 .5l-8 8" stroke="#b5c3d6" stroke-width="1"/></svg>
<div style="left:1730.5px;top:147px;width:105.5px;height:24px;background:#fafbfe;border:1px solid #d6d7db;border-bottom:none"></div><div class="t" style="left:1735px;top:152px;height:17px;line-height:17px;font-size:13.3px;letter-spacing:0.121px;color:#3f6db3">Add Material</div><svg style="left:1819.0px;top:153.5px;" width="9" height="9" viewBox="0 0 9 9"><path d="M.5 .5l8 8M8.500 .5l-8 8" stroke="#b5c3d6" stroke-width="1"/></svg>
<svg style="left:1890px;top:156px;" width="8" height="6" viewBox="0 0 8 6"><path d="M0 1.2h8L4 5.2z" fill="#4d4f52"/></svg>
<svg style="left:1905px;top:155px;" width="7" height="11" viewBox="0 0 7 11"><path d="M1 0h5v6h1v1h-3v3.500h-1v-3.500h-3v-1h1z" fill="#505255"/></svg>
<svg style="left:1581px;top:178px" width="16" height="16" viewBox="0 0 16 16"><g fill="none" stroke="#9a9a9a" stroke-width=".9"><circle cx="8" cy="8" r="7.300"/><ellipse cx="8" cy="8" rx="3.300" ry="7.300"/><path d="M8 .7v14.600M.7 8h14.600M2 4.300h12M2 11.700h12"/></g></svg>
<div class="t" style="left:1600.5px;top:178px;height:16px;line-height:16px;font-size:12px;letter-spacing:-0.056px;color:#5e5e5e">Add to Global Materials</div>
<svg style="left:1729.5px;top:183px;" width="8" height="6" viewBox="0 0 8 6"><path d="M0.5 1.2h7.0L4 4.7z" fill="#555"/></svg>
<svg style="left:1750px;top:179.5px;" width="13" height="13" viewBox="0 0 13 13"><path d="M6.500 0v13M0 6.500h13" stroke="#777" stroke-width="1"/></svg>
<div class="t" style="left:1769px;top:178px;height:16px;line-height:16px;font-size:12px;letter-spacing:0.229px;color:#5e5e5e">Add to Component</div>
<svg style="left:1877.5px;top:183px;" width="8" height="6" viewBox="0 0 8 6"><path d="M0.5 1.2h7.0L4 4.7z" fill="#555"/></svg>
<div style="left:1577px;top:201px;width:270px;height:17.5px;background:#fff;border:1px solid #c9cacc"></div>
<div style="left:1852px;top:200px;width:61px;height:18.5px;background:#ebebeb;border:1px solid #d2d2d2;border-radius:2px"></div>
<div class="t" style="left:1865px;top:202px;height:16px;line-height:16px;font-size:12px;letter-spacing:-0.705px;">Search</div>
<div style="left:1578px;top:223px;width:333px;height:491px;background:#fff;border:1px solid #d0d2d6"></div>
<svg style="left:1584px;top:227.5px;" width="8" height="10" viewBox="0 0 8 10"><path d="M2 1l4 4-4 4" fill="none" stroke="#5a5a5a" stroke-width="1.2"/></svg>
<svg style="left:1599px;top:224.5px" width="16" height="16" viewBox="0 0 16 16"><g fill="#f2a33c"><rect x="7" y="0" width="4" height="4"/><rect x="2" y="3" width="4" height="4"/><rect x="12" y="3" width="4" height="4"/><rect x="7" y="5.500" width="4" height="4"/><rect x="12" y="8.500" width="4" height="4"/></g><rect x="7" y="11" width="4" height="4" fill="#dd7a1c"/><path d="M8 11.500h-6M4.500 8.500l-4 3 4 3z" fill="#e2592a" stroke="#e2592a" stroke-width="1.200"/></svg>
<div class="t" style="left:1621px;top:225px;height:16px;line-height:16px;font-size:12px;letter-spacing:-0.196px;">Recent Materials</div>
<svg style="left:1584px;top:245.5px;" width="8" height="10" viewBox="0 0 8 10"><path d="M2 1l4 4-4 4" fill="none" stroke="#5a5a5a" stroke-width="1.2"/></svg>
<svg style="left:1599px;top:242.5px" width="16" height="16" viewBox="0 0 16 16"><rect x="1" y="1" width="14" height="14" fill="#2e74b5"/><rect x="2" y="2" width="2.600" height="12.500" fill="#38a8e8"/><rect x="5.200" y="2" width="2.600" height="12.500" fill="#f7931e"/><rect x="8.400" y="2" width="2.600" height="12.500" fill="#7ac143"/><rect x="11.600" y="2" width="2.600" height="12.500" fill="#ec1c8e"/><path d="M3.600 3v3M6.600 3v3M9.600 3v3M12.600 3v3" stroke="#fff" stroke-width=".8"/></svg>
<div class="t" style="left:1621px;top:243px;height:16px;line-height:16px;font-size:12px;letter-spacing:-0.026px;">Material Library</div>
<svg style="left:1584px;top:263.5px;" width="8" height="10" viewBox="0 0 8 10"><path d="M2 1l4 4-4 4" fill="none" stroke="#5a5a5a" stroke-width="1.2"/></svg>
<svg style="left:1599px;top:260.5px" width="16" height="16" viewBox="0 0 16 16"><rect x=".5" y="2" width="15" height="12" rx="3" fill="#2c3f9e"/><path d="M3 11l2-6 6-1.500 3 3-2 4z" fill="#4aa3e8"/><path d="M5 10l1.500-4 4-1 1.500 2-1 2.500z" fill="#f5e25a"/></svg>
<div class="t" style="left:1621px;top:261px;height:16px;line-height:16px;font-size:12px;letter-spacing:0.245px;">Built-in</div>
<svg style="left:1584px;top:281.5px;" width="8" height="10" viewBox="0 0 8 10"><path d="M2 1l4 4-4 4" fill="none" stroke="#5a5a5a" stroke-width="1.2"/></svg>
<svg style="left:1599px;top:278.5px" width="16" height="16" viewBox="0 0 16 16"><rect x="1" y="1" width="14" height="14" fill="#e8e4f3"/><path d="M4.500 1v14M8 1v14M11.500 1v14" stroke="#f6d6e6" stroke-width="1.500"/><path d="M3 0l9 5-4 1 6 4.500-4 .8 4 4.700-9-5.500 4-.8-6-4.500 4-.7z" fill="#4a7dba"/></svg>
<div class="t" style="left:1621px;top:279px;height:16px;line-height:16px;font-size:12px;letter-spacing:-0.084px;">AC/DC</div>
<svg style="left:1584px;top:299.5px;" width="8" height="10" viewBox="0 0 8 10"><path d="M2 1l4 4-4 4" fill="none" stroke="#5a5a5a" stroke-width="1.2"/></svg>
<svg style="left:1599px;top:296.5px" width="16" height="16" viewBox="0 0 16 16"><rect x="1" y="1" width="14" height="14" fill="#e8e4f3"/><path d="M4.500 1v14M8 1v14M11.500 1v14" stroke="#f6d6e6" stroke-width="1.500"/><rect x="1.500" y="4.500" width="14" height="6.500" rx="1.500" fill="#eee" stroke="#8a8a8a" stroke-width="1"/><path d="M0 6.500v2.500" stroke="#8a8a8a" stroke-width="1.500"/><path d="M4 6.500v2.500M12.500 6.500v2.500" stroke="#d81b60" stroke-width="1.200"/></svg>
<div class="t" style="left:1621px;top:297px;height:16px;line-height:16px;font-size:12px;letter-spacing:-0.169px;">Battery</div>
<svg style="left:1584px;top:317.5px;" width="8" height="10" viewBox="0 0 8 10"><path d="M2 1l4 4-4 4" fill="none" stroke="#5a5a5a" stroke-width="1.2"/></svg>
<svg style="left:1599px;top:314.5px" width="16" height="16" viewBox="0 0 16 16"><rect x="1.500" y="1" width="13" height="14" rx="2.500" fill="#3b87c8"/><path d="M4 13c1-5 3-8.500 5.500-9 1 3 2.500 5.500 3 9z" fill="#f2a33c"/><path d="M6 13c.8-3 2-5 3.500-5.500.7 2 1.500 3.500 1.800 5.500z" fill="#9bd05a"/></svg>
<div class="t" style="left:1621px;top:315px;height:16px;line-height:16px;font-size:12px;letter-spacing:-0.100px;">Bioheat</div>
<svg style="left:1584px;top:335.5px;" width="8" height="10" viewBox="0 0 8 10"><path d="M2 1l4 4-4 4" fill="none" stroke="#5a5a5a" stroke-width="1.2"/></svg>
<svg style="left:1599px;top:332.5px" width="16" height="16" viewBox="0 0 16 16"><path d="M1.500 2c-1.500 3 1 6-.3 12" fill="none" stroke="#e8833a" stroke-width="1.300"/><path d="M3 5l5-2 7 2v10h-10l-2-2z" fill="#c22a4a"/><path d="M6 8l3 2 3-2M7 12l2-2 3 3" stroke="#f2a33c" stroke-width="1" fill="none"/><path d="M13 0c1 1.500 2 2.500 2 4a2 2 0 0 1-4 0c0-1.500 1-2.500 2-4z" fill="#d81b9a"/></svg>
<div class="t" style="left:1621px;top:333px;height:16px;line-height:16px;font-size:12px;letter-spacing:0.143px;">Building</div>
<svg style="left:1584px;top:353.5px;" width="8" height="10" viewBox="0 0 8 10"><path d="M2 1l4 4-4 4" fill="none" stroke="#5a5a5a" stroke-width="1.2"/></svg>
<svg style="left:1599px;top:350.5px" width="16" height="16" viewBox="0 0 16 16"><rect x="0" y="0" width="16" height="8" fill="#dcebf8"/><path d="M1 8h3.500l1.500 3h5l1.500-3h3" fill="none" stroke="#7a7a7a" stroke-width="1.200"/><path d="M5 8h6.500l-1.200 2.500h-4.100z" fill="#9a9a9a"/><path d="M0 13h3" stroke="#3b87c8" stroke-width="1.200"/><path d="M12.500 13.500h3M14 12v3" stroke="#e8202a" stroke-width="1.200"/></svg>
<div class="t" style="left:1621px;top:351px;height:16px;line-height:16px;font-size:12px;letter-spacing:-0.040px;">Corrosion</div>
<svg style="left:1584px;top:371.5px;" width="8" height="10" viewBox="0 0 8 10"><path d="M2 1l4 4-4 4" fill="none" stroke="#5a5a5a" stroke-width="1.2"/></svg>
<svg style="left:1599px;top:368.5px" width="16" height="16" viewBox="0 0 16 16"><rect x="1" y="1" width="14" height="14" fill="#e8e4f3"/><path d="M4.500 1v14M8 1v14M11.500 1v14" stroke="#f6d6e6" stroke-width="1.500"/><path d="M1 12.500l3.500-9.500 3.500 9.500z" fill="none" stroke="#3b87c8" stroke-width="1.200"/><path d="M10 6v4a2.300 2.300 0 0 0 4.600 0v-4" fill="none" stroke="#3b87c8" stroke-width="1.300"/></svg>
<div class="t" style="left:1621px;top:369px;height:16px;line-height:16px;font-size:12px;letter-spacing:-0.011px;">Equilibrium Discharge</div>
<svg style="left:1584px;top:389.5px;" width="8" height="10" viewBox="0 0 8 10"><path d="M2 1l4 4-4 4" fill="none" stroke="#5a5a5a" stroke-width="1.2"/></svg>
<svg style="left:1599px;top:386.5px" width="16" height="16" viewBox="0 0 16 16"><rect x="5" y="1" width="7" height="14" fill="#fff" stroke="#9a9a9a" stroke-width=".9"/><path d="M7 4h3M8.500 2.500v3" stroke="#e8202a" stroke-width="1.100"/><path d="M7 12h3" stroke="#333" stroke-width="1.100"/><circle cx="2.500" cy="2.500" r="2" fill="#d81b60"/><circle cx="5" cy="5.500" r="1.700" fill="#d81b60"/><circle cx="2.500" cy="13" r="1.800" fill="#1aa179"/><circle cx="11" cy="9" r="1.600" fill="#d81b60"/><circle cx="14" cy="8" r="1.800" fill="#d81b60"/><circle cx="12.500" cy="14" r="1.700" fill="#1aa179"/></svg>
<div class="t" style="left:1621px;top:387px;height:16px;line-height:16px;font-size:12px;letter-spacing:-0.221px;">Fuel Cell and Electrolyzer</div>
<svg style="left:1584px;top:407.5px;" width="8" height="10" viewBox="0 0 8 10"><path d="M2 1l4 4-4 4" fill="none" stroke="#5a5a5a" stroke-width="1.2"/></svg>
<svg style="left:1599px;top:404.5px" width="16" height="16" viewBox="0 0 16 16"><rect x="1" y="1" width="14" height="14" fill="#e8e4f3"/><path d="M4.500 1v14M8 1v14M11.500 1v14" stroke="#f6d6e6" stroke-width="1.500"/><path d="M3.500 4c1.200 2 2 3 2 4.500a2 2 0 0 1-4 0c0-1.500.8-2.500 2-4.500z" fill="#3b87c8"/><path d="M7.500 5q1.500-1.500 3 0t3 0M7.500 8q1.500-1.500 3 0t3 0M7.500 11q1.500-1.500 3 0t3 0" fill="none" stroke="#3b87c8" stroke-width="1"/></svg>
<div class="t" style="left:1621px;top:405px;height:16px;line-height:16px;font-size:12px;letter-spacing:-0.344px;">Liquids and Gases</div>
<svg style="left:1584px;top:425.5px;" width="8" height="10" viewBox="0 0 8 10"><path d="M2 1l4 4-4 4" fill="none" stroke="#5a5a5a" stroke-width="1.2"/></svg>
<svg style="left:1599px;top:422.5px" width="16" height="16" viewBox="0 0 16 16"><rect x="1" y="1" width="14" height="14" fill="#e8e4f3"/><path d="M4.500 1v14M8 1v14M11.500 1v14" stroke="#f6d6e6" stroke-width="1.500"/><text x="4" y="12" font-size="13" font-family="Liberation Sans, sans-serif" fill="#2e6da8">µ</text></svg>
<div class="t" style="left:1621px;top:423px;height:16px;line-height:16px;font-size:12px;letter-spacing:-0.567px;">MEMS</div>
<svg style="left:1584px;top:443.5px;" width="8" height="10" viewBox="0 0 8 10"><path d="M2 1l4 4-4 4" fill="none" stroke="#5a5a5a" stroke-width="1.2"/></svg>
<svg style="left:1599px;top:440.5px" width="16" height="16" viewBox="0 0 16 16"><rect x="1" y="1" width="14" height="14" fill="#e8e4f3"/><path d="M4.500 1v14M8 1v14M11.500 1v14" stroke="#f6d6e6" stroke-width="1.500"/><path d="M3 14v-7a5 5 0 0 1 10 0v7h-3v-7a2 2 0 0 0-4 0v7z" fill="#c8102e"/></svg>
<div class="t" style="left:1621px;top:441px;height:16px;line-height:16px;font-size:12px;letter-spacing:0.089px;">Nonlinear Magnetic</div>
<svg style="left:1584px;top:461.5px;" width="8" height="10" viewBox="0 0 8 10"><path d="M2 1l4 4-4 4" fill="none" stroke="#5a5a5a" stroke-width="1.2"/></svg>
<svg style="left:1599px;top:458.5px" width="16" height="16" viewBox="0 0 16 16"><path d="M1 3v10M3.500 3v10" stroke="#3b87c8" stroke-width="1"/><path d="M8 1.500c2.500 3.500 2.500 9.500 0 13-2.500-3.500-2.500-9.500 0-13z" fill="#cfe0f0" stroke="#3b87c8" stroke-width="1.200"/><path d="M12.500 5a4 4 0 0 0 0 6M15 6.500a2.500 2.500 0 0 0 0 3" fill="none" stroke="#3b87c8" stroke-width="1"/></svg>
<div class="t" style="left:1621px;top:459px;height:16px;line-height:16px;font-size:12px;letter-spacing:0.075px;">Optical</div>
<svg style="left:1584px;top:479.5px;" width="8" height="10" viewBox="0 0 8 10"><path d="M2 1l4 4-4 4" fill="none" stroke="#5a5a5a" stroke-width="1.2"/></svg>
<svg style="left:1599px;top:476.5px" width="16" height="16" viewBox="0 0 16 16"><rect x="1" y="1" width="14" height="14" fill="#e8e4f3"/><path d="M4.500 1v14M8 1v14M11.500 1v14" stroke="#f6d6e6" stroke-width="1.500"/><path d="M6 0l7 5-3.500.8 5.500 4.200-9-4 3.500-.8z" fill="#4a7dba"/><path d="M8 7l3 8" stroke="#4a7dba" stroke-width="1.500"/><path d="M3 11a3 3 0 0 1 0 4M5 10a5 5 0 0 1 0 6M1 12a1.500 1.500 0 0 1 0 2" fill="none" stroke="#4a7dba" stroke-width=".8"/></svg>
<div class="t" style="left:1621px;top:477px;height:16px;line-height:16px;font-size:12px;letter-spacing:-0.194px;">Piezoelectric</div>
<svg style="left:1584px;top:497.5px;" width="8" height="10" viewBox="0 0 8 10"><path d="M2 1l4 4-4 4" fill="none" stroke="#5a5a5a" stroke-width="1.2"/></svg>
<svg style="left:1599px;top:494.5px" width="16" height="16" viewBox="0 0 16 16"><path d="M1 0l10 5.500-4 .8 8 5-11-4.500 4-.8z" fill="#4a7dba"/><rect x="1" y="12" width="14" height="3.500" fill="#d9d9d9" stroke="#7a7a7a" stroke-width=".9"/><path d="M3 10.500h10" stroke="#7a7a7a"/></svg>
<div class="t" style="left:1621px;top:495px;height:16px;line-height:16px;font-size:12px;letter-spacing:-0.157px;">Piezoresistivity</div>
<svg style="left:1584px;top:515.5px;" width="8" height="10" viewBox="0 0 8 10"><path d="M2 1l4 4-4 4" fill="none" stroke="#5a5a5a" stroke-width="1.2"/></svg>
<svg style="left:1599px;top:512.5px" width="16" height="16" viewBox="0 0 16 16"><path d="M1 1q1 2 2 0t2 0 2 0 2 0 2 0 2 0 2 0M2 1v4M5 1v4M8 1v4M11 1v4M14 1v4" fill="none" stroke="#3b87c8" stroke-width=".9"/><rect x="1.500" y="6.500" width="13" height="8" rx="1.500" fill="#e9f0f8" stroke="#3b87c8" stroke-width="1.100"/><path d="M3.500 9h9M3.500 12q1-1.500 2 0t2 0 2 0 2 0" fill="none" stroke="#3b87c8" stroke-width=".9"/></svg>
<div class="t" style="left:1621px;top:513px;height:16px;line-height:16px;font-size:12px;letter-spacing:-1.200px;">RF</div>
<svg style="left:1584px;top:533.5px;" width="8" height="10" viewBox="0 0 8 10"><path d="M2 1l4 4-4 4" fill="none" stroke="#5a5a5a" stroke-width="1.2"/></svg>
<svg style="left:1599px;top:530.5px" width="16" height="16" viewBox="0 0 16 16"><rect x="1" y="1" width="14" height="14" fill="#e8e4f3"/><path d="M4.500 1v14M8 1v14M11.500 1v14" stroke="#f6d6e6" stroke-width="1.500"/><rect x="3" y="4" width="10" height="9" fill="#e6e6e6" stroke="#3b87c8" stroke-width="1.100"/><path d="M5 4v-2M8 4v-2M11 4v-2M5 15v-2M8 15v-2M11 15v-2" stroke="#3b87c8" stroke-width="1"/></svg>
<div class="t" style="left:1621px;top:531px;height:16px;line-height:16px;font-size:12px;letter-spacing:-0.019px;">Semiconductors</div>
<svg style="left:1584px;top:551.5px;" width="8" height="10" viewBox="0 0 8 10"><path d="M2 1l4 4-4 4" fill="none" stroke="#5a5a5a" stroke-width="1.2"/></svg>
<svg style="left:1599px;top:548.5px" width="16" height="16" viewBox="0 0 16 16"><path d="M0 2l9 5-3.500.8 6.500 5.200-10-4.500 3.500-.8z" fill="#4a7dba"/><path d="M12 1c-2 3 1.500 5-.5 8s1 4 0 6M15 2c-1.500 3 1 5-.3 8s.8 3 0 5" fill="none" stroke="#e8833a" stroke-width="1.400"/></svg>
<div class="t" style="left:1621px;top:549px;height:16px;line-height:16px;font-size:12px;letter-spacing:-0.051px;">Thermoelectric</div>
<svg style="left:1584px;top:569.5px;" width="8" height="10" viewBox="0 0 8 10"><path d="M2 1l4 4-4 4" fill="none" stroke="#5a5a5a" stroke-width="1.2"/></svg>
<svg style="left:1599px;top:566.5px" width="16" height="16" viewBox="0 0 16 16"><rect x="4.500" y=".5" width="11" height="14.500" fill="#e8833a" stroke="#c8651c" stroke-width=".8"/><path d="M7.500 1v14M10.300 1v14M13 1v14" stroke="#fbe0c8" stroke-width="1"/><circle cx="3.500" cy="9" r="2.200" fill="#fff" stroke="#7a7a7a" stroke-width=".9"/><path d="M.5 15.500v-2.500a2 2 0 0 1 2-1.500h2a2 2 0 0 1 2 1.500v2.500z" fill="#fff" stroke="#7a7a7a" stroke-width=".9"/></svg>
<div class="t" style="left:1621px;top:567px;height:16px;line-height:16px;font-size:12px;letter-spacing:-0.153px;">User-Defined Library</div>
<!-- messages -->
<div style="left:927px;top:727px;width:990px;height:282px;background:#fafbfe;border:1px solid #d6d7db"></div>
<div style="left:928px;top:756px;width:988px;height:1px;background:#d6d7db"></div>
<div style="left:932px;top:733px;width:88.5px;height:24px;background:#fafbfe;border:1px solid #d6d7db;border-bottom:none"></div><div class="t" style="left:937px;top:738px;height:17px;line-height:17px;font-size:13.3px;letter-spacing:-0.231px;color:#3f6db3">Messages</div><svg style="left:1004.0px;top:739.5px;" width="9" height="9" viewBox="0 0 9 9"><path d="M.5 .5l8 8M8.500 .5l-8 8" stroke="#b5c3d6" stroke-width="1"/></svg>
<div style="left:1029px;top:733px;width:60px;height:23px;background:#ebebeb"></div><div class="t" style="left:1033px;top:737px;height:17px;line-height:17px;font-size:13.3px;letter-spacing:-0.246px;">Progress</div>
<div style="left:1097px;top:733px;width:30px;height:23px;background:#ebebeb"></div><div class="t" style="left:1101px;top:737px;height:17px;line-height:17px;font-size:13.3px;letter-spacing:-0.346px;">Log</div>
<div style="left:1135px;top:733px;width:109px;height:23px;background:#ebebeb"></div><div class="t" style="left:1139px;top:737px;height:17px;line-height:17px;font-size:13.3px;letter-spacing:-0.111px;">Probe Table 1</div><svg style="left:1228.0px;top:739.5px;" width="9" height="9" viewBox="0 0 9 9"><path d="M.5 .5l8 8M8.500 .5l-8 8" stroke="#b5c3d6" stroke-width="1"/></svg>
<svg style="left:1890px;top:743px;" width="8" height="6" viewBox="0 0 8 6"><path d="M0 1.2h8L4 5.2z" fill="#4d4f52"/></svg>
<svg style="left:1905px;top:742px;" width="7" height="11" viewBox="0 0 7 11"><path d="M1 0h5v6h1v1h-3v3.500h-1v-3.500h-3v-1h1z" fill="#505255"/></svg>
<svg style="left:936px;top:763px;" width="14" height="18" viewBox="0 0 14 18"><path d="M2 1l5.500 9" stroke="#6a5a48" stroke-width="1.600"/><path d="M6 8.500l4 1.500 2.500 7-6 .5-2.500-5.500z" fill="#f0a850"/><path d="M7 12l2 5M9 11.500l2 5" stroke="#d98a30" stroke-width=".7"/></svg>
<div style="left:956px;top:762px;width:20px;height:20px;background:#a9d3f5;border:1px solid #4ba3ec;border-radius:2px"></div>
<svg style="left:958.5px;top:764px;" width="16" height="16" viewBox="0 0 16 16"><rect x=".6" y=".6" width="12" height="10" fill="#fff" stroke="#3b87c8" stroke-width="1.200"/><path d="M.6 3h12" stroke="#3b87c8" stroke-width="1.200"/><rect x="5.500" y="7" width="9.500" height="7" fill="#fff" stroke="#3b87c8" stroke-width="1"/><path d="M5.500 7l4.750 4 4.750-4" fill="none" stroke="#3b87c8" stroke-width=".9"/></svg>
<div style="left:932px;top:785px;width:980px;height:219px;background:#fafbfe;border:1px solid #d0d2d6;overflow:hidden"></div>
<div style="left:933px;top:786px;width:961px;height:201px;overflow:hidden"><div class="t" style="left:2.6000000000000227px;top:-10px;height:16px;line-height:16px;font-size:12px;letter-spacing:-0.284px;">[Nov 28, 2024, 8:17 AM]</div><div class="t" style="left:129.20000000000005px;top:-10px;height:16px;line-height:16px;font-size:12px;letter-spacing:-0.019px;">Formed union of 8 solid objects.</div><div class="t" style="left:2.6000000000000227px;top:5px;height:16px;line-height:16px;font-size:12px;letter-spacing:-0.284px;">[Nov 28, 2024, 8:17 AM]</div><div class="t" style="left:129.20000000000005px;top:5px;height:16px;line-height:16px;font-size:12px;letter-spacing:-0.219px;">Finalized geometry has 10 domains, 69 boundaries, 132 edges, and 80 vertices.</div><div class="t" style="left:2.6000000000000227px;top:20px;height:16px;line-height:16px;font-size:12px;letter-spacing:-0.284px;">[Nov 28, 2024, 8:36 AM]</div><div class="t" style="left:129.20000000000005px;top:20px;height:16px;line-height:16px;font-size:12px;letter-spacing:-0.019px;">Formed union of 8 solid objects.</div><div class="t" style="left:2.6000000000000227px;top:35px;height:16px;line-height:16px;font-size:12px;letter-spacing:-0.284px;">[Nov 28, 2024, 8:36 AM]</div><div class="t" style="left:129.20000000000005px;top:35px;height:16px;line-height:16px;font-size:12px;letter-spacing:-0.219px;">Finalized geometry has 10 domains, 69 boundaries, 132 edges, and 80 vertices.</div><div class="t" style="left:2.6000000000000227px;top:50px;height:16px;line-height:16px;font-size:12px;letter-spacing:-0.284px;">[Nov 28, 2024, 8:48 AM]</div><div class="t" style="left:129.20000000000005px;top:50px;height:16px;line-height:16px;font-size:12px;letter-spacing:0.049px;">Saved file: D:\Documents\Dave\Uni\Bachelors End Project\Tumor Models\Tumor in COMSOL\Hepatic Tumor Ablation\Hepatic Tumor Ablation - with real tumor 07051961.mph</div><div class="t" style="left:2.6000000000000227px;top:65px;height:16px;line-height:16px;font-size:12px;letter-spacing:-0.284px;">[Nov 28, 2024, 8:48 AM]</div><div class="t" style="left:129.20000000000005px;top:65px;height:16px;line-height:16px;font-size:12px;letter-spacing:0.049px;">Saved file: D:\Documents\Dave\Uni\Bachelors End Project\Tumor Models\Tumor in COMSOL\Hepatic Tumor Ablation\Hepatic Tumor Ablation - with real tumor 07051961.mph</div><div class="t" style="left:2.6000000000000227px;top:80px;height:16px;line-height:16px;font-size:12px;letter-spacing:-0.284px;">[Nov 28, 2024, 8:48 AM]</div><div class="t" style="left:129.20000000000005px;top:80px;height:16px;line-height:16px;font-size:12px;letter-spacing:-0.057px;">Opened file: D:\Documents\Dave\Uni\Bachelors End Project\Tumor Models\Tumor in COMSOL\Breast Carcinoma Geometries in COMSOL Test.mph</div><div class="t" style="left:2.6000000000000227px;top:95px;height:16px;line-height:16px;font-size:12px;letter-spacing:-0.284px;">[Nov 28, 2024, 8:52 AM]</div><div class="t" style="left:129.20000000000005px;top:95px;height:16px;line-height:16px;font-size:12px;letter-spacing:-0.058px;">Imported 1 solid object and 1 surface object from Mesh Part 1.</div><div class="t" style="left:2.6000000000000227px;top:110px;height:16px;line-height:16px;font-size:12px;letter-spacing:-0.284px;">[Nov 28, 2024, 8:52 AM]</div><div class="t" style="left:129.20000000000005px;top:110px;height:16px;line-height:16px;font-size:12px;letter-spacing:-0.060px;">Formed union of 1 solid object and 2 surface objects.</div><div class="t" style="left:2.6000000000000227px;top:125px;height:16px;line-height:16px;font-size:12px;letter-spacing:-0.284px;">[Nov 28, 2024, 8:52 AM]</div><div class="t" style="left:129.20000000000005px;top:125px;height:16px;line-height:16px;font-size:12px;letter-spacing:-0.198px;">Finalized geometry has 1 domain, 18 boundaries, 46 edges, and 34 vertices.</div><div class="t" style="left:2.6000000000000227px;top:140px;height:16px;line-height:16px;font-size:12px;letter-spacing:-0.284px;">[Nov 28, 2024, 8:52 AM]</div><div class="t" style="left:129.20000000000005px;top:140px;height:16px;line-height:16px;font-size:12px;letter-spacing:-0.093px;">Finalized geometry is disconnected and has 3 components.</div><div class="t" style="left:2.6000000000000227px;top:155px;height:16px;line-height:16px;font-size:12px;letter-spacing:-0.284px;">[Nov 28, 2024, 8:53 AM]</div><div class="t" style="left:129.20000000000005px;top:155px;height:16px;line-height:16px;font-size:12px;letter-spacing:-0.111px;">Saved file: D:\Documents\Dave\Uni\Bachelors End Project\Tumor Models\Tumor in COMSOL\Breast Carcinoma Geometries in COMSOL Test.mph (4418 KB)</div><div class="t" style="left:2.6000000000000227px;top:170px;height:16px;line-height:16px;font-size:12px;letter-spacing:-0.284px;">[Nov 28, 2024, 8:53 AM]</div><div class="t" style="left:129.20000000000005px;top:170px;height:16px;line-height:16px;font-size:12px;letter-spacing:0.067px;">Opened file: D:\Documents\Dave\Uni\Bachelors End Project\Tumor Models\Tumor in COMSOL\Hepatic Tumor Ablation\Hepatic Tumor Ablation - with real tumor 07051961.mph</div><div class="t" style="left:2.6000000000000227px;top:185px;height:16px;line-height:16px;font-size:12px;letter-spacing:-0.284px;">[Nov 28, 2024, 8:53 AM]</div><div class="t" style="left:129.20000000000005px;top:185px;height:16px;line-height:16px;font-size:12px;letter-spacing:-0.083px;">Some geometric entities are hidden.</div></div>
<div style="left:1894px;top:786px;width:17px;height:201px;background:#fafbfe"></div>
<div style="left:1894px;top:786px;width:17px;height:17px;background:#f1f1f2"></div>
<div style="left:1894px;top:970px;width:17px;height:17px;background:#f1f1f2"></div>
<div style="left:1894px;top:920px;width:17px;height:45px;background:#e2e2e3"></div>
<svg style="left:1897.5px;top:792px;" width="10" height="6" viewBox="0 0 10 6"><path d="M1 5.500l4-4 4 4" fill="none" stroke="#d0d0d0" stroke-width="1.200"/></svg>
<svg style="left:1897.5px;top:975px;" width="10" height="6" viewBox="0 0 10 6"><path d="M1 .5l4 4 4-4" fill="none" stroke="#d0d0d0" stroke-width="1.200"/></svg>
<div style="left:933px;top:987px;width:961px;height:16px;background:#fafbfe"></div>
<div style="left:933px;top:987px;width:17px;height:16px;background:#f1f1f2"></div>
<div style="left:1877px;top:987px;width:17px;height:16px;background:#f1f1f2"></div>
<div style="left:950px;top:987px;width:807px;height:16px;background:#e2e2e3"></div>
<svg style="left:939px;top:990px;" width="6" height="10" viewBox="0 0 6 10"><path d="M5.500 1l-4 4 4 4" fill="none" stroke="#d0d0d0" stroke-width="1.200"/></svg>
<svg style="left:1883px;top:990px;" width="6" height="10" viewBox="0 0 6 10"><path d="M.5 1l4 4-4 4" fill="none" stroke="#d0d0d0" stroke-width="1.200"/></svg>
<div style="left:1894px;top:987px;width:17px;height:16px;background:#f1f1f2"></div>
<div style="left:0px;top:1010px;width:1920px;height:30px;background:#fafbfe"></div>
<div class="t" style="left:1241px;top:1021px;height:14px;line-height:14px;font-size:11.5px;letter-spacing:-0.391px;">1.29 GB | 1.79 GB</div>
<!-- taskbar -->
<div style="left:0px;top:1040px;width:1920px;height:40px;background:linear-gradient(90deg,#d6d6d0 0%,#d5d6d1 30%,#d9dbdb 48%,#dde0e3 58%,#d9d8d4 70%,#d7d5cf 100%)"></div>
<svg style="left:16px;top:1052px;" width="17" height="17" viewBox="0 0 17 17"><path d="M0 2.300l7-1v6.700h-7zM8 1.200l9-1.200v8h-9zM0 9h7v6.700l-7-1zM8 9h9v8l-9-1.200z" fill="#111"/></svg>
<div style="left:49px;top:1040.5px;width:286.5px;height:39.5px;background:#fff;border:1px solid #c8c8c8"></div>
<svg style="left:59px;top:1051px;" width="18" height="18" viewBox="0 0 18 18"><circle cx="10.500" cy="7" r="5.300" fill="none" stroke="#222" stroke-width="1.400"/><path d="M6.800 10.800l-5.800 6" stroke="#222" stroke-width="1.500"/></svg>
<div class="t" style="left:88px;top:1051px;height:19px;line-height:19px;font-size:15px;letter-spacing:-0.079px;color:#333">Typ hier om te zoeken</div>
<svg style="left:351px;top:1051px;" width="19" height="17" viewBox="0 0 19 17"><path d="M1.500 3v-1.500h11v1.500M1.500 14v1.500h11v-1.500" fill="none" stroke="#111" stroke-width="1.300"/><rect x="2.500" y="4.500" width="9" height="8" fill="none" stroke="#111" stroke-width="1.300"/><path d="M16 1v3.500M16 8.500v7.500" stroke="#111" stroke-width="1.300"/><rect x="14.800" y="5.300" width="2.400" height="2.400" fill="#111"/></svg>
<div style="left:534px;top:1040px;width:48px;height:40px;background:rgba(255,255,255,.5)"></div>
<svg style="left:399px;top:1050px;" width="22" height="20" viewBox="0 0 22 20"><path d="M1 2h7l2 2h11v3h-20z" fill="#e8b13a"/><path d="M1 5.500h20v12.500h-20z" fill="#f7d257"/><path d="M5 12h12v6h-3v-3h-6v3h-3z" fill="#3b87c8"/></svg>
<svg style="left:447px;top:1047px;" width="26" height="26" viewBox="0 0 26 26"><circle cx="12" cy="12" r="11.500" fill="#fff"/><path d="M12 .5a11.500 11.500 0 0 1 10 5.750h-10a5.750 5.750 0 0 0-5 2.900l-4.900-3a11.500 11.500 0 0 1 9.900-5.650z" fill="#db4437"/><path d="M22 6.250a11.500 11.500 0 0 1-10.500 17.250l5-8.600a5.750 5.750 0 0 0 .5-5.900z" fill="#f4c20d"/><path d="M11.500 23.500a11.500 11.500 0 0 1-9.400-17.350l5 8.700a5.750 5.750 0 0 0 5 2.900l2-.3z" fill="#0f9d58"/><circle cx="12" cy="12" r="4.600" fill="#4285f4" stroke="#fff" stroke-width="1.200"/><circle cx="19" cy="19.500" r="6.500" fill="#c0401c"/><text x="19" y="22.500" text-anchor="middle" font-size="8.500" font-family="Liberation Sans, sans-serif" fill="#fff">D</text></svg>
<svg style="left:497px;top:1049px;" width="24" height="23" viewBox="0 0 24 23"><path d="M5.500 6h13v8.500c0 3.500-3 6-6.500 7.500-3.500-1.500-6.500-4-6.500-7.500z" fill="#e8471f"/><path d="M12 .5l11.500 3.500-11.500 3.500-11.500-3.500z" fill="#1d1d1d"/><path d="M21.500 4.500v4" stroke="#1d1d1d" stroke-width="1"/><path d="M6 8.500c2-1 4-1 6 .8 2-1.800 4-1.800 6-.8l-1 3.200h-10z" fill="#1d1d1d"/><circle cx="9.300" cy="10" r="1.500" fill="#fff"/><circle cx="14.700" cy="10" r="1.500" fill="#fff"/><path d="M12 11l-1.300 3.500 1.300 6 1.300-6z" fill="#f7c6b5"/></svg>
<svg style="left:545px;top:1048px;" width="26.4" height="24" viewBox="0 0 22 20"><ellipse cx="11" cy="10" rx="10.500" ry="8.500" fill="#ebebf0"/><path d="M3 7l12-4 1 1 4 9-9 5-5-1z" fill="#e4e4ea"/><rect x="3.500" y="3.700" width="15" height="12" rx="2.200" fill="#fdfdf6"/><rect x="4" y="4.200" width="14" height="11" rx="2" fill="#2446c0"/><path d="M9 4.200h7a2 2 0 0 1 2 2v4.300l-5-2.500z" fill="#15168c"/><path d="M4 6.200a2 2 0 0 1 1.500-1.900v10.800a2 2 0 0 1-1.500-1.900z" fill="#3d74e6"/><path d="M6.800 6.500l7.500 3.800-4 1-1.500 2.800h-2z" fill="#f3e64e"/><path d="M8 6.800l4.500 2.700-3 .5z" fill="#b8e68a"/><path d="M10.500 11.300l7.500-1.300v2.500l-8.500 1.700z" fill="#3aa8f2"/><path d="M5.500 14.300h11.500a2 2 0 0 1-1 .9h-9.500z" fill="#10106e"/></svg>
<svg style="left:595px;top:1047.5px;" width="25" height="25" viewBox="0 0 25 25"><rect x="0" y="0" width="25" height="25" rx="4" fill="#f7e017"/><circle cx="12.500" cy="12.500" r="7.500" fill="none" stroke="#222" stroke-width="2"/><path d="M8.500 12l3.300 3.500 8-9" fill="none" stroke="#222" stroke-width="2.200"/></svg>
<div style="left:391px;top:1078px;width:40px;height:2px;background:#0a78d4"></div>
<div style="left:440px;top:1078px;width:40px;height:2px;background:#0a78d4"></div>
<div style="left:489px;top:1078px;width:40px;height:2px;background:#0a78d4"></div>
<div style="left:534px;top:1078px;width:48px;height:2px;background:#0a78d4"></div>
<div style="left:587px;top:1078px;width:40px;height:2px;background:#0a78d4"></div>
<div style="left:423px;top:1078px;width:8px;height:2px;background:#5fa9e6"></div>
<svg style="left:1438px;top:1050px;" width="22" height="22" viewBox="0 0 22 22"><circle cx="9.500" cy="10" r="8.300" fill="#fff" stroke="#2a8fd6" stroke-width="1.400"/><text x="9.500" y="15.500" text-anchor="middle" font-size="15" font-weight="bold" font-family="Liberation Sans, sans-serif" fill="#1e88d0">?</text><circle cx="17" cy="15.500" r="4.300" fill="#f2a33c" stroke="#fff" stroke-width=".8"/><text x="17" y="18.300" text-anchor="middle" font-size="7" font-weight="bold" font-family="Liberation Sans, sans-serif" fill="#fff">i</text></svg>
<svg style="left:1484px;top:1047px;" width="28" height="26" viewBox="0 0 28 26"><path d="M6 23.500a5.500 5.500 0 0 1 .5-11 7 7 0 0 1 13-1.500 5.700 5.700 0 0 1 .5 12.500z" fill="#a9c7f2" stroke="#8db2e6" stroke-width=".8"/><circle cx="19.500" cy="6.500" r="5.500" fill="#d8362b"/><text x="19.500" y="9.500" text-anchor="middle" font-size="8" font-family="Liberation Sans, sans-serif" fill="#fff">1</text></svg>
<div class="t" style="left:1517px;top:1051px;height:18px;line-height:18px;font-size:14.5px;letter-spacing:-1.200px;color:#222">6°C</div>
<div class="t" style="left:1547px;top:1051px;height:18px;line-height:18px;font-size:14.5px;letter-spacing:-0.390px;color:#222">Grotendeels be...</div>
<svg style="left:1675px;top:1054px;" width="14" height="10" viewBox="0 0 14 10"><path d="M1 8.500l6-6.500 6 6.500" fill="none" stroke="#222" stroke-width="1.400"/></svg>
<svg style="left:1699px;top:1052px;" width="17" height="16" viewBox="0 0 17 16"><rect x="3.500" y="1" width="12" height="8.500" fill="none" stroke="#222" stroke-width="1.200"/><path d="M7 12.500h5M9.500 9.500v3" stroke="#222" stroke-width="1.200"/><rect x=".5" y="6.500" width="4.500" height="8.500" fill="#dcdcdc" stroke="#222" stroke-width="1.100"/></svg>
<svg style="left:1722px;top:1052px;" width="18" height="16" viewBox="0 0 18 16"><path d="M1 5.500h3l4-4v13l-4-4h-3z" fill="none" stroke="#222" stroke-width="1.200"/><path d="M10.500 5.500a3.500 3.500 0 0 1 0 5" fill="none" stroke="#222" stroke-width="1.100"/><path d="M12.500 3.500a6.500 6.500 0 0 1 0 9" fill="none" stroke="#8a8a8a" stroke-width="1"/><path d="M14.500 1.500a9.500 9.500 0 0 1 0 13" fill="none" stroke="#aaa" stroke-width="1"/></svg>
<svg style="left:1746px;top:1051px;" width="18" height="19" viewBox="0 0 18 19"><path d="M5 1l4 2.500-4 2.500-4-2.500zM13 1l4 2.500-4 2.500-4-2.500zM5 7l4 2.500-4 2.500-4-2.500zM13 7l4 2.500-4 2.500-4-2.500zM9 11l4 2.500-4 2.500-4-2.500z" fill="#222"/><rect x="0" y="8.500" width="8.500" height="9.500" rx="1" fill="#d8232a"/><text x="4.200" y="16.500" text-anchor="middle" font-size="8.500" font-weight="bold" font-family="Liberation Sans, sans-serif" fill="#fff">6</text></svg>
<div class="t" style="left:1773px;top:1053px;height:16px;line-height:16px;font-size:12px;letter-spacing:-1.200px;color:#222">ENG</div>
<div class="t" style="left:1724.0px;top:1043px;width:220px;height:16px;line-height:16px;font-size:12px;text-align:center;letter-spacing:-0.758px;color:#222">08:54</div>
<div class="t" style="left:1724.5px;top:1061px;width:220px;height:16px;line-height:16px;font-size:12px;text-align:center;letter-spacing:-0.277px;color:#222">28-11-2024</div>
<svg style="left:1878px;top:1051px;" width="18" height="18" viewBox="0 0 18 18"><path d="M1 1.500h15.500v11.500h-5v3.500l-3.500-3.500h-7z" fill="none" stroke="#222" stroke-width="1.300"/></svg>
<div style="left:1915px;top:1040px;width:1px;height:40px;background:#b9b9b6"></div>
</div></body></html>
